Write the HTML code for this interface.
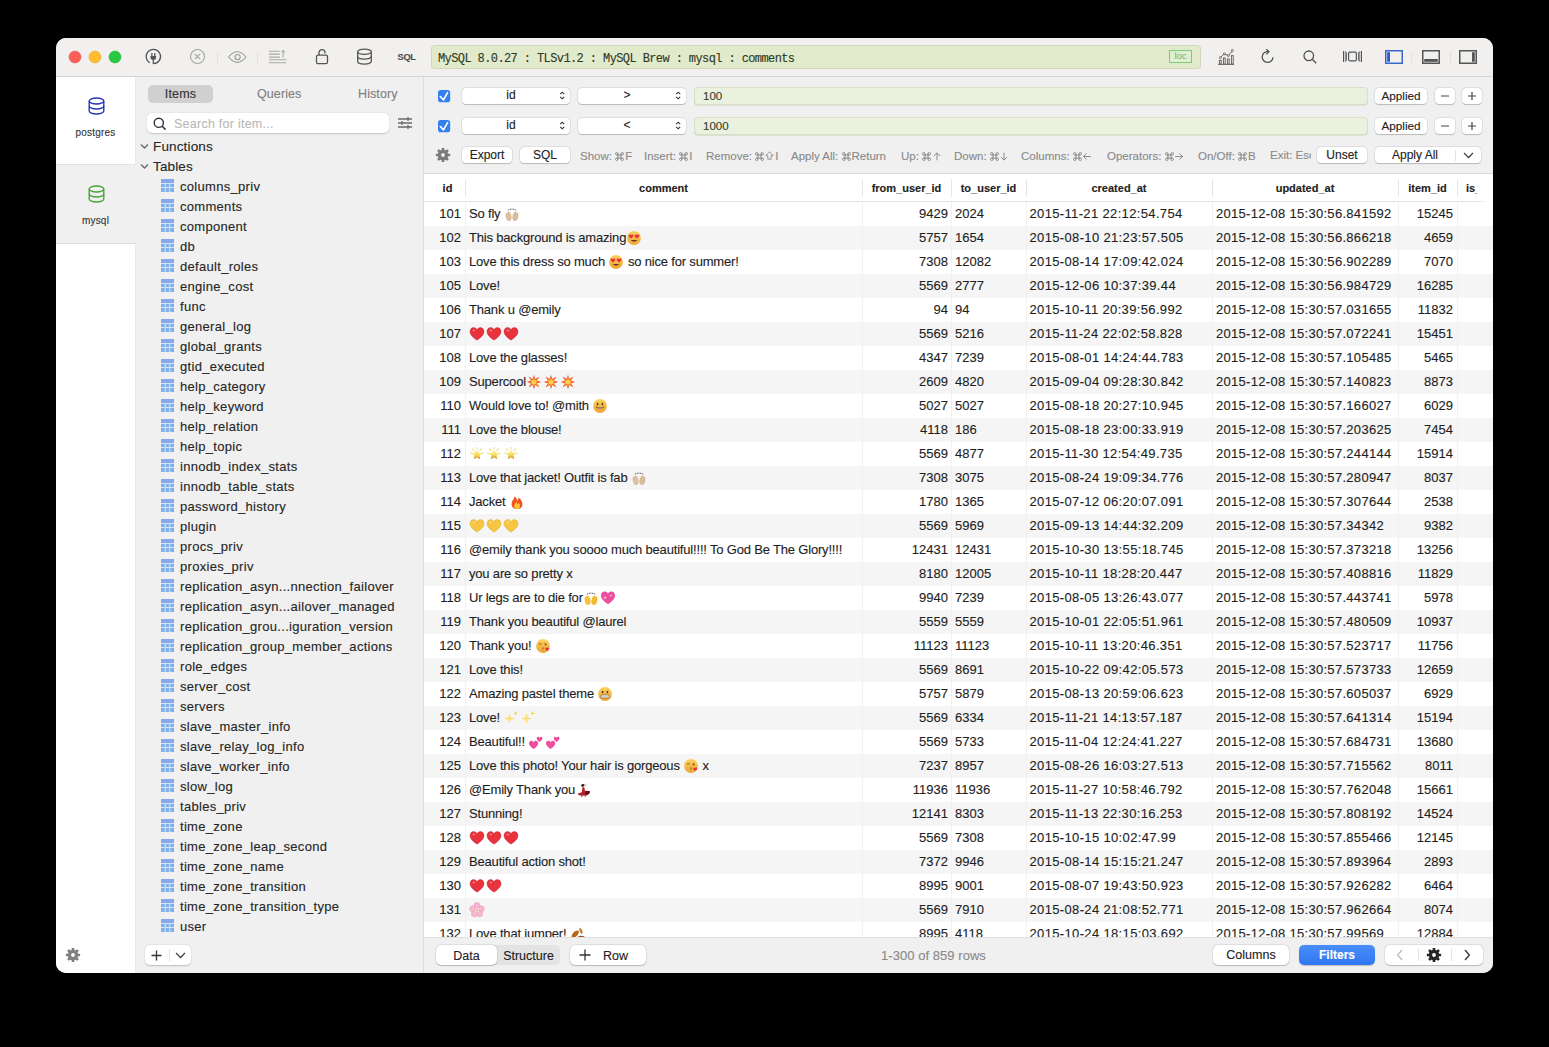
<!DOCTYPE html>
<html><head><meta charset="utf-8"><title>TablePlus</title><style>
*{box-sizing:border-box}
html,body{margin:0;padding:0}
body{width:1549px;height:1047px;background:#000;overflow:hidden;position:relative;font-family:"Liberation Sans",sans-serif;color:#222}
#win{position:absolute;left:56px;top:38px;width:1437px;height:935px;border-radius:10px;overflow:hidden;background:#f0f0f0}
.a{position:absolute}
.t{position:absolute;white-space:nowrap;-webkit-text-stroke:0.12px currentColor}
svg{position:absolute;overflow:visible}
svg.e{position:static;display:inline-block;vertical-align:-2px}
</style></head>
<body><div id="win">
<div class="a" style="left:0px;top:0px;width:1437px;height:38px;background:#f1f0ee"></div><div class="a" style="left:0px;top:38px;width:1437px;height:1px;background:#d6d6d6"></div><svg style="left:12px;top:12px;" width="14" height="14" viewBox="0 0 14 14"><circle cx="7" cy="7" r="6" fill="#fe5f57" stroke="#e14640" stroke-width="0.5"/></svg><svg style="left:32px;top:12px;" width="14" height="14" viewBox="0 0 14 14"><circle cx="7" cy="7" r="6" fill="#febc2e" stroke="#dea123" stroke-width="0.5"/></svg><svg style="left:52px;top:12px;" width="14" height="14" viewBox="0 0 14 14"><circle cx="7" cy="7" r="6" fill="#28c840" stroke="#1aab29" stroke-width="0.5"/></svg><svg style="left:89px;top:10px;" width="17" height="17" viewBox="0 0 17 17"><path d="M4.7 14.7 A7.2 7.2 0 1 1 8.3 15.7" fill="none" stroke="#555" stroke-width="1.25"/><path d="M5.5 7.9 h5.6 v1.6 a2.8 2.4 0 0 1 -5.6 0 z" fill="#555"/><rect x="6.2" y="4.9" width="1.3" height="3.2" rx="0.5" fill="#555"/><rect x="9.1" y="4.9" width="1.3" height="3.2" rx="0.5" fill="#555"/><rect x="7.65" y="11" width="1.3" height="4.9" fill="#555"/></svg><svg style="left:133px;top:10px;" width="17" height="17" viewBox="0 0 17 17"><circle cx="8.5" cy="8.5" r="7" fill="none" stroke="#a3a3a3" stroke-width="1.1"/><path d="M5.8 5.8 L11.2 11.2 M11.2 5.8 L5.8 11.2" stroke="#a3a3a3" stroke-width="1.1"/></svg><div class="a" style="left:161px;top:14px;width:1px;height:12px;background:#e2e2e2"></div><svg style="left:171px;top:12px;" width="21" height="14" viewBox="0 0 21 14"><path d="M1.6 7 Q10.3 -3.6 19 7 Q10.3 17.6 1.6 7 Z" fill="none" stroke="#9c9c9c" stroke-width="1.15"/><circle cx="10.6" cy="7.1" r="2.6" fill="none" stroke="#9c9c9c" stroke-width="1.15"/></svg><div class="a" style="left:201px;top:14px;width:1px;height:12px;background:#e2e2e2"></div><svg style="left:212px;top:11px;" width="20" height="16" viewBox="0 0 20 16"><g stroke="#a8a8a8" stroke-width="1.1"><path d="M1 2.2 H11.8 M1 5.1 H11.8 M1 8.1 H11.8 M1 10.8 H18.2 M1 13.7 H18.2"/><path d="M15.2 8.6 V1.6 M13.6 3.2 L15.2 1.6 L16.8 3.2" fill="none"/></g></svg><svg style="left:258px;top:10px;" width="16" height="18" viewBox="0 0 16 18"><rect x="2.5" y="7.2" width="11" height="8.5" rx="1.6" fill="none" stroke="#555" stroke-width="1.3"/><path d="M5 7.2 V4.6 A3 3 0 0 1 11 4.6 V5.4" fill="none" stroke="#555" stroke-width="1.3"/></svg><svg style="left:300px;top:10px;" width="17" height="18" viewBox="0 0 17 18"><g fill="none" stroke="#555" stroke-width="1.3"><ellipse cx="8.5" cy="3.8" rx="6.8" ry="2.6"/><path d="M1.7 3.8 V13.6 A6.8 2.6 0 0 0 15.3 13.6 V3.8"/><path d="M1.7 8.6 A6.8 2.6 0 0 0 15.3 8.6"/></g></svg><div class="t" style="left:341.5px;top:12.100000000000001px;font-size:9.3px;line-height:14px;color:#4f4f4f;font-weight:bold;letter-spacing:-0.3px;">SQL</div><div class="a" style="left:375px;top:7px;width:770px;height:24px;background:#e2eacc;border:1px solid #d0d7bd;border-radius:3.5px"></div><div class="t" style="left:382px;top:12.700000000000003px;font-size:12px;line-height:16px;color:#2f3a26;letter-spacing:-0.6px;font-family:'Liberation Mono',monospace;">MySQL 8.0.27 : TLSv1.2 : MySQL Brew : mysql : comments</div><div class="a" style="left:1113px;top:12px;width:23px;height:13px;border:1px solid #7acb79;background:#e0efd0"></div><div class="t" style="left:1113px;top:11.5px;font-size:9.5px;line-height:12px;color:#78c078;width:23px;text-align:center;">loc</div><svg style="left:1161px;top:10px;" width="18" height="18" viewBox="0 0 18 18"><g fill="none" stroke="#5a5a5a" stroke-width="0.9"><path d="M1 16.4 H17"/><rect x="2.4" y="12.4" width="1.8" height="3.6"/><rect x="6.4" y="10" width="1.8" height="6"/><rect x="10.4" y="11" width="1.8" height="5"/><rect x="14.4" y="7.6" width="1.8" height="8.4"/><path d="M3.3 9.6 L7.3 5.8 L11.3 7.6 L15.3 3.2"/></g><g fill="#f1f0ee" stroke="#5a5a5a" stroke-width="0.8"><circle cx="3.3" cy="9.6" r="1"/><circle cx="7.3" cy="5.8" r="1"/><circle cx="11.3" cy="7.6" r="1"/><circle cx="15.3" cy="2.6" r="1.1"/></g></svg><svg style="left:1204px;top:10px;" width="17" height="17" viewBox="0 0 17 17"><path d="M13 9.2 A5.4 5.4 0 1 1 8.2 3.6" fill="none" stroke="#555" stroke-width="1.3"/><path d="M6.2 1.2 L9 3.6 L6.4 6.2" fill="none" stroke="#555" stroke-width="1.3"/></svg><svg style="left:1246px;top:11px;" width="16" height="16" viewBox="0 0 16 16"><circle cx="6.8" cy="6.8" r="4.8" fill="none" stroke="#555" stroke-width="1.3"/><path d="M10.3 10.3 L14.2 14.2" stroke="#555" stroke-width="1.4"/></svg><svg style="left:1286px;top:12px;" width="21" height="14" viewBox="0 0 21 14"><g fill="none" stroke="#555" stroke-width="1.2"><path d="M1.6 1 V12 M19.4 1 V12"/><rect x="6.6" y="2.2" width="7.8" height="8.6" rx="1.2"/></g><path d="M3.4 1 L4.8 2.4 V10.6 L3.4 12 Z M17.6 1 L16.2 2.4 V10.6 L17.6 12 Z" fill="#555"/></svg><svg style="left:1329px;top:12px;" width="18" height="14" viewBox="0 0 18 14"><rect x="0.75" y="0.75" width="16.5" height="12.5" fill="none" stroke="#3a68c8" stroke-width="1.5"/><rect x="2.2" y="2.2" width="2.8" height="9.6" fill="#2c58d4"/></svg><div class="a" style="left:1355px;top:14px;width:1px;height:11px;background:#e0e0e0"></div><svg style="left:1366px;top:12px;" width="18" height="14" viewBox="0 0 18 14"><rect x="0.75" y="0.75" width="16.5" height="12.5" fill="none" stroke="#555" stroke-width="1.5"/><rect x="2.2" y="9" width="13.6" height="2.8" fill="#555"/></svg><div class="a" style="left:1394px;top:14px;width:1px;height:11px;background:#e0e0e0"></div><svg style="left:1403px;top:12px;" width="18" height="14" viewBox="0 0 18 14"><rect x="0.75" y="0.75" width="16.5" height="12.5" fill="none" stroke="#555" stroke-width="1.5"/><rect x="13" y="2.2" width="2.8" height="9.6" fill="#555"/></svg><div class="a" style="left:0px;top:39px;width:79px;height:896px;background:#fff"></div><div class="a" style="left:79px;top:39px;width:1px;height:896px;background:#e9e9e9"></div><div class="a" style="left:0px;top:126px;width:80px;height:79px;background:#f0f0f0"></div><div class="a" style="left:0px;top:126px;width:79px;height:1px;background:#e2e2e2"></div><div class="a" style="left:0px;top:205px;width:79px;height:1px;background:#dcdcdc"></div><svg style="left:32px;top:59px;" width="17" height="18" viewBox="0 0 17 18"><g fill="none" stroke="#2437b8" stroke-width="1.4"><ellipse cx="8.5" cy="4" rx="7.3" ry="3"/><path d="M1.2 4 V14 A7.3 3 0 0 0 15.8 14 V4"/><path d="M1.2 9 A7.3 3 0 0 0 15.8 9"/></g></svg><div class="t" style="left:0px;top:88.0px;font-size:10px;line-height:14px;color:#333;letter-spacing:0.2px;width:79px;text-align:center;">postgres</div><svg style="left:32px;top:147px;" width="17" height="18" viewBox="0 0 17 18"><g fill="none" stroke="#4aa43a" stroke-width="1.4"><ellipse cx="8.5" cy="4" rx="7.3" ry="3"/><path d="M1.2 4 V14 A7.3 3 0 0 0 15.8 14 V4"/><path d="M1.2 9 A7.3 3 0 0 0 15.8 9"/></g></svg><div class="t" style="left:0px;top:176.0px;font-size:10px;line-height:14px;color:#333;letter-spacing:0.2px;width:79px;text-align:center;">mysql</div><svg style="left:9px;top:909px;" width="16" height="16" viewBox="0 0 16 16"><circle cx="8" cy="8" r="5.2" fill="#808080"/><rect x="6.65" y="0.9000000000000004" width="2.7" height="3.3999999999999995" rx="0.6" fill="#808080" transform="rotate(0 8 8)"/><rect x="6.65" y="0.9000000000000004" width="2.7" height="3.3999999999999995" rx="0.6" fill="#808080" transform="rotate(45 8 8)"/><rect x="6.65" y="0.9000000000000004" width="2.7" height="3.3999999999999995" rx="0.6" fill="#808080" transform="rotate(90 8 8)"/><rect x="6.65" y="0.9000000000000004" width="2.7" height="3.3999999999999995" rx="0.6" fill="#808080" transform="rotate(135 8 8)"/><rect x="6.65" y="0.9000000000000004" width="2.7" height="3.3999999999999995" rx="0.6" fill="#808080" transform="rotate(180 8 8)"/><rect x="6.65" y="0.9000000000000004" width="2.7" height="3.3999999999999995" rx="0.6" fill="#808080" transform="rotate(225 8 8)"/><rect x="6.65" y="0.9000000000000004" width="2.7" height="3.3999999999999995" rx="0.6" fill="#808080" transform="rotate(270 8 8)"/><rect x="6.65" y="0.9000000000000004" width="2.7" height="3.3999999999999995" rx="0.6" fill="#808080" transform="rotate(315 8 8)"/><circle cx="8" cy="8" r="1.9" fill="#fff"/></svg><div class="a" style="left:80px;top:39px;width:287px;height:896px;background:#f0f0f0"></div><div class="a" style="left:367px;top:39px;width:1px;height:896px;background:#dcdcdc"></div><div class="a" style="left:92px;top:47px;width:65px;height:18px;background:#d0d0d0;border-radius:5px"></div><div class="t" style="left:92px;top:48.0px;font-size:12.5px;line-height:16px;color:#333;letter-spacing:0.2px;width:65px;text-align:center;">Items</div><div class="t" style="left:201px;top:48.0px;font-size:12.5px;line-height:16px;color:#7f7f7f;letter-spacing:0.1px;">Queries</div><div class="t" style="left:302px;top:48.0px;font-size:12.5px;line-height:16px;color:#7f7f7f;letter-spacing:0.1px;">History</div><div class="a" style="left:91px;top:75px;width:242px;height:20px;background:#fff;border-radius:5px;box-shadow:0 0.5px 1.5px rgba(0,0,0,0.18)"></div><svg style="left:97px;top:79px;" width="14" height="14" viewBox="0 0 14 14"><circle cx="5.8" cy="5.8" r="4.6" fill="none" stroke="#333" stroke-width="1.4"/><path d="M9.2 9.2 L12.6 12.6" stroke="#333" stroke-width="1.5"/></svg><div class="t" style="left:118px;top:78.0px;font-size:12.5px;line-height:16px;color:#b9b9b9;letter-spacing:0.25px;">Search for item...</div><svg style="left:341px;top:78px;" width="16" height="14" viewBox="0 0 16 14"><g stroke="#6a6a6a" stroke-width="1.3"><path d="M1 3 H15 M1 7 H15 M1 11 H15"/><path d="M11 1 V5 M5 5 V9 M11 9 V13"/></g></svg><svg style="left:84px;top:105px;" width="9" height="7" viewBox="0 0 9 7"><path d="M1 1.5 L4.5 5 L8 1.5" fill="none" stroke="#6a6a6a" stroke-width="1.4"/></svg><div class="t" style="left:97px;top:99.0px;font-size:13.5px;line-height:20px;color:#262626;letter-spacing:0.15px;">Functions</div><svg style="left:84px;top:125px;" width="9" height="7" viewBox="0 0 9 7"><path d="M1 1.5 L4.5 5 L8 1.5" fill="none" stroke="#6a6a6a" stroke-width="1.4"/></svg><div class="t" style="left:97px;top:119.0px;font-size:13.5px;line-height:20px;color:#262626;letter-spacing:0.15px;">Tables</div><svg style="left:105px;top:141px;" width="13" height="13" viewBox="0 0 13 13"><rect x="0" y="0" width="13" height="13" fill="#d2e6fb"/><rect x="0" y="0" width="13" height="4" fill="#87a8e8"/><rect x="0" y="5" width="3.7" height="3" fill="#7fb0ea"/><rect x="4.7" y="5" width="3.6" height="3" fill="#86afed"/><rect x="9.3" y="5" width="3.7" height="3" fill="#7fb0ea"/><rect x="0" y="9" width="3.7" height="4" fill="#7fb0ea"/><rect x="4.7" y="9" width="3.6" height="4" fill="#86afed"/><rect x="9.3" y="9" width="3.7" height="4" fill="#7fb0ea"/></svg><div class="t" style="left:124px;top:139.0px;font-size:13px;line-height:20px;color:#262626;letter-spacing:0.3px;">columns_priv</div><svg style="left:105px;top:161px;" width="13" height="13" viewBox="0 0 13 13"><rect x="0" y="0" width="13" height="13" fill="#d2e6fb"/><rect x="0" y="0" width="13" height="4" fill="#87a8e8"/><rect x="0" y="5" width="3.7" height="3" fill="#7fb0ea"/><rect x="4.7" y="5" width="3.6" height="3" fill="#86afed"/><rect x="9.3" y="5" width="3.7" height="3" fill="#7fb0ea"/><rect x="0" y="9" width="3.7" height="4" fill="#7fb0ea"/><rect x="4.7" y="9" width="3.6" height="4" fill="#86afed"/><rect x="9.3" y="9" width="3.7" height="4" fill="#7fb0ea"/></svg><div class="t" style="left:124px;top:159.0px;font-size:13px;line-height:20px;color:#262626;letter-spacing:0.3px;">comments</div><svg style="left:105px;top:181px;" width="13" height="13" viewBox="0 0 13 13"><rect x="0" y="0" width="13" height="13" fill="#d2e6fb"/><rect x="0" y="0" width="13" height="4" fill="#87a8e8"/><rect x="0" y="5" width="3.7" height="3" fill="#7fb0ea"/><rect x="4.7" y="5" width="3.6" height="3" fill="#86afed"/><rect x="9.3" y="5" width="3.7" height="3" fill="#7fb0ea"/><rect x="0" y="9" width="3.7" height="4" fill="#7fb0ea"/><rect x="4.7" y="9" width="3.6" height="4" fill="#86afed"/><rect x="9.3" y="9" width="3.7" height="4" fill="#7fb0ea"/></svg><div class="t" style="left:124px;top:179.0px;font-size:13px;line-height:20px;color:#262626;letter-spacing:0.3px;">component</div><svg style="left:105px;top:201px;" width="13" height="13" viewBox="0 0 13 13"><rect x="0" y="0" width="13" height="13" fill="#d2e6fb"/><rect x="0" y="0" width="13" height="4" fill="#87a8e8"/><rect x="0" y="5" width="3.7" height="3" fill="#7fb0ea"/><rect x="4.7" y="5" width="3.6" height="3" fill="#86afed"/><rect x="9.3" y="5" width="3.7" height="3" fill="#7fb0ea"/><rect x="0" y="9" width="3.7" height="4" fill="#7fb0ea"/><rect x="4.7" y="9" width="3.6" height="4" fill="#86afed"/><rect x="9.3" y="9" width="3.7" height="4" fill="#7fb0ea"/></svg><div class="t" style="left:124px;top:199.0px;font-size:13px;line-height:20px;color:#262626;letter-spacing:0.3px;">db</div><svg style="left:105px;top:221px;" width="13" height="13" viewBox="0 0 13 13"><rect x="0" y="0" width="13" height="13" fill="#d2e6fb"/><rect x="0" y="0" width="13" height="4" fill="#87a8e8"/><rect x="0" y="5" width="3.7" height="3" fill="#7fb0ea"/><rect x="4.7" y="5" width="3.6" height="3" fill="#86afed"/><rect x="9.3" y="5" width="3.7" height="3" fill="#7fb0ea"/><rect x="0" y="9" width="3.7" height="4" fill="#7fb0ea"/><rect x="4.7" y="9" width="3.6" height="4" fill="#86afed"/><rect x="9.3" y="9" width="3.7" height="4" fill="#7fb0ea"/></svg><div class="t" style="left:124px;top:219.0px;font-size:13px;line-height:20px;color:#262626;letter-spacing:0.3px;">default_roles</div><svg style="left:105px;top:241px;" width="13" height="13" viewBox="0 0 13 13"><rect x="0" y="0" width="13" height="13" fill="#d2e6fb"/><rect x="0" y="0" width="13" height="4" fill="#87a8e8"/><rect x="0" y="5" width="3.7" height="3" fill="#7fb0ea"/><rect x="4.7" y="5" width="3.6" height="3" fill="#86afed"/><rect x="9.3" y="5" width="3.7" height="3" fill="#7fb0ea"/><rect x="0" y="9" width="3.7" height="4" fill="#7fb0ea"/><rect x="4.7" y="9" width="3.6" height="4" fill="#86afed"/><rect x="9.3" y="9" width="3.7" height="4" fill="#7fb0ea"/></svg><div class="t" style="left:124px;top:239.0px;font-size:13px;line-height:20px;color:#262626;letter-spacing:0.3px;">engine_cost</div><svg style="left:105px;top:261px;" width="13" height="13" viewBox="0 0 13 13"><rect x="0" y="0" width="13" height="13" fill="#d2e6fb"/><rect x="0" y="0" width="13" height="4" fill="#87a8e8"/><rect x="0" y="5" width="3.7" height="3" fill="#7fb0ea"/><rect x="4.7" y="5" width="3.6" height="3" fill="#86afed"/><rect x="9.3" y="5" width="3.7" height="3" fill="#7fb0ea"/><rect x="0" y="9" width="3.7" height="4" fill="#7fb0ea"/><rect x="4.7" y="9" width="3.6" height="4" fill="#86afed"/><rect x="9.3" y="9" width="3.7" height="4" fill="#7fb0ea"/></svg><div class="t" style="left:124px;top:259.0px;font-size:13px;line-height:20px;color:#262626;letter-spacing:0.3px;">func</div><svg style="left:105px;top:281px;" width="13" height="13" viewBox="0 0 13 13"><rect x="0" y="0" width="13" height="13" fill="#d2e6fb"/><rect x="0" y="0" width="13" height="4" fill="#87a8e8"/><rect x="0" y="5" width="3.7" height="3" fill="#7fb0ea"/><rect x="4.7" y="5" width="3.6" height="3" fill="#86afed"/><rect x="9.3" y="5" width="3.7" height="3" fill="#7fb0ea"/><rect x="0" y="9" width="3.7" height="4" fill="#7fb0ea"/><rect x="4.7" y="9" width="3.6" height="4" fill="#86afed"/><rect x="9.3" y="9" width="3.7" height="4" fill="#7fb0ea"/></svg><div class="t" style="left:124px;top:279.0px;font-size:13px;line-height:20px;color:#262626;letter-spacing:0.3px;">general_log</div><svg style="left:105px;top:301px;" width="13" height="13" viewBox="0 0 13 13"><rect x="0" y="0" width="13" height="13" fill="#d2e6fb"/><rect x="0" y="0" width="13" height="4" fill="#87a8e8"/><rect x="0" y="5" width="3.7" height="3" fill="#7fb0ea"/><rect x="4.7" y="5" width="3.6" height="3" fill="#86afed"/><rect x="9.3" y="5" width="3.7" height="3" fill="#7fb0ea"/><rect x="0" y="9" width="3.7" height="4" fill="#7fb0ea"/><rect x="4.7" y="9" width="3.6" height="4" fill="#86afed"/><rect x="9.3" y="9" width="3.7" height="4" fill="#7fb0ea"/></svg><div class="t" style="left:124px;top:299.0px;font-size:13px;line-height:20px;color:#262626;letter-spacing:0.3px;">global_grants</div><svg style="left:105px;top:321px;" width="13" height="13" viewBox="0 0 13 13"><rect x="0" y="0" width="13" height="13" fill="#d2e6fb"/><rect x="0" y="0" width="13" height="4" fill="#87a8e8"/><rect x="0" y="5" width="3.7" height="3" fill="#7fb0ea"/><rect x="4.7" y="5" width="3.6" height="3" fill="#86afed"/><rect x="9.3" y="5" width="3.7" height="3" fill="#7fb0ea"/><rect x="0" y="9" width="3.7" height="4" fill="#7fb0ea"/><rect x="4.7" y="9" width="3.6" height="4" fill="#86afed"/><rect x="9.3" y="9" width="3.7" height="4" fill="#7fb0ea"/></svg><div class="t" style="left:124px;top:319.0px;font-size:13px;line-height:20px;color:#262626;letter-spacing:0.3px;">gtid_executed</div><svg style="left:105px;top:341px;" width="13" height="13" viewBox="0 0 13 13"><rect x="0" y="0" width="13" height="13" fill="#d2e6fb"/><rect x="0" y="0" width="13" height="4" fill="#87a8e8"/><rect x="0" y="5" width="3.7" height="3" fill="#7fb0ea"/><rect x="4.7" y="5" width="3.6" height="3" fill="#86afed"/><rect x="9.3" y="5" width="3.7" height="3" fill="#7fb0ea"/><rect x="0" y="9" width="3.7" height="4" fill="#7fb0ea"/><rect x="4.7" y="9" width="3.6" height="4" fill="#86afed"/><rect x="9.3" y="9" width="3.7" height="4" fill="#7fb0ea"/></svg><div class="t" style="left:124px;top:339.0px;font-size:13px;line-height:20px;color:#262626;letter-spacing:0.3px;">help_category</div><svg style="left:105px;top:361px;" width="13" height="13" viewBox="0 0 13 13"><rect x="0" y="0" width="13" height="13" fill="#d2e6fb"/><rect x="0" y="0" width="13" height="4" fill="#87a8e8"/><rect x="0" y="5" width="3.7" height="3" fill="#7fb0ea"/><rect x="4.7" y="5" width="3.6" height="3" fill="#86afed"/><rect x="9.3" y="5" width="3.7" height="3" fill="#7fb0ea"/><rect x="0" y="9" width="3.7" height="4" fill="#7fb0ea"/><rect x="4.7" y="9" width="3.6" height="4" fill="#86afed"/><rect x="9.3" y="9" width="3.7" height="4" fill="#7fb0ea"/></svg><div class="t" style="left:124px;top:359.0px;font-size:13px;line-height:20px;color:#262626;letter-spacing:0.3px;">help_keyword</div><svg style="left:105px;top:381px;" width="13" height="13" viewBox="0 0 13 13"><rect x="0" y="0" width="13" height="13" fill="#d2e6fb"/><rect x="0" y="0" width="13" height="4" fill="#87a8e8"/><rect x="0" y="5" width="3.7" height="3" fill="#7fb0ea"/><rect x="4.7" y="5" width="3.6" height="3" fill="#86afed"/><rect x="9.3" y="5" width="3.7" height="3" fill="#7fb0ea"/><rect x="0" y="9" width="3.7" height="4" fill="#7fb0ea"/><rect x="4.7" y="9" width="3.6" height="4" fill="#86afed"/><rect x="9.3" y="9" width="3.7" height="4" fill="#7fb0ea"/></svg><div class="t" style="left:124px;top:379.0px;font-size:13px;line-height:20px;color:#262626;letter-spacing:0.3px;">help_relation</div><svg style="left:105px;top:401px;" width="13" height="13" viewBox="0 0 13 13"><rect x="0" y="0" width="13" height="13" fill="#d2e6fb"/><rect x="0" y="0" width="13" height="4" fill="#87a8e8"/><rect x="0" y="5" width="3.7" height="3" fill="#7fb0ea"/><rect x="4.7" y="5" width="3.6" height="3" fill="#86afed"/><rect x="9.3" y="5" width="3.7" height="3" fill="#7fb0ea"/><rect x="0" y="9" width="3.7" height="4" fill="#7fb0ea"/><rect x="4.7" y="9" width="3.6" height="4" fill="#86afed"/><rect x="9.3" y="9" width="3.7" height="4" fill="#7fb0ea"/></svg><div class="t" style="left:124px;top:399.0px;font-size:13px;line-height:20px;color:#262626;letter-spacing:0.3px;">help_topic</div><svg style="left:105px;top:421px;" width="13" height="13" viewBox="0 0 13 13"><rect x="0" y="0" width="13" height="13" fill="#d2e6fb"/><rect x="0" y="0" width="13" height="4" fill="#87a8e8"/><rect x="0" y="5" width="3.7" height="3" fill="#7fb0ea"/><rect x="4.7" y="5" width="3.6" height="3" fill="#86afed"/><rect x="9.3" y="5" width="3.7" height="3" fill="#7fb0ea"/><rect x="0" y="9" width="3.7" height="4" fill="#7fb0ea"/><rect x="4.7" y="9" width="3.6" height="4" fill="#86afed"/><rect x="9.3" y="9" width="3.7" height="4" fill="#7fb0ea"/></svg><div class="t" style="left:124px;top:419.0px;font-size:13px;line-height:20px;color:#262626;letter-spacing:0.3px;">innodb_index_stats</div><svg style="left:105px;top:441px;" width="13" height="13" viewBox="0 0 13 13"><rect x="0" y="0" width="13" height="13" fill="#d2e6fb"/><rect x="0" y="0" width="13" height="4" fill="#87a8e8"/><rect x="0" y="5" width="3.7" height="3" fill="#7fb0ea"/><rect x="4.7" y="5" width="3.6" height="3" fill="#86afed"/><rect x="9.3" y="5" width="3.7" height="3" fill="#7fb0ea"/><rect x="0" y="9" width="3.7" height="4" fill="#7fb0ea"/><rect x="4.7" y="9" width="3.6" height="4" fill="#86afed"/><rect x="9.3" y="9" width="3.7" height="4" fill="#7fb0ea"/></svg><div class="t" style="left:124px;top:439.0px;font-size:13px;line-height:20px;color:#262626;letter-spacing:0.3px;">innodb_table_stats</div><svg style="left:105px;top:461px;" width="13" height="13" viewBox="0 0 13 13"><rect x="0" y="0" width="13" height="13" fill="#d2e6fb"/><rect x="0" y="0" width="13" height="4" fill="#87a8e8"/><rect x="0" y="5" width="3.7" height="3" fill="#7fb0ea"/><rect x="4.7" y="5" width="3.6" height="3" fill="#86afed"/><rect x="9.3" y="5" width="3.7" height="3" fill="#7fb0ea"/><rect x="0" y="9" width="3.7" height="4" fill="#7fb0ea"/><rect x="4.7" y="9" width="3.6" height="4" fill="#86afed"/><rect x="9.3" y="9" width="3.7" height="4" fill="#7fb0ea"/></svg><div class="t" style="left:124px;top:459.0px;font-size:13px;line-height:20px;color:#262626;letter-spacing:0.3px;">password_history</div><svg style="left:105px;top:481px;" width="13" height="13" viewBox="0 0 13 13"><rect x="0" y="0" width="13" height="13" fill="#d2e6fb"/><rect x="0" y="0" width="13" height="4" fill="#87a8e8"/><rect x="0" y="5" width="3.7" height="3" fill="#7fb0ea"/><rect x="4.7" y="5" width="3.6" height="3" fill="#86afed"/><rect x="9.3" y="5" width="3.7" height="3" fill="#7fb0ea"/><rect x="0" y="9" width="3.7" height="4" fill="#7fb0ea"/><rect x="4.7" y="9" width="3.6" height="4" fill="#86afed"/><rect x="9.3" y="9" width="3.7" height="4" fill="#7fb0ea"/></svg><div class="t" style="left:124px;top:479.0px;font-size:13px;line-height:20px;color:#262626;letter-spacing:0.3px;">plugin</div><svg style="left:105px;top:501px;" width="13" height="13" viewBox="0 0 13 13"><rect x="0" y="0" width="13" height="13" fill="#d2e6fb"/><rect x="0" y="0" width="13" height="4" fill="#87a8e8"/><rect x="0" y="5" width="3.7" height="3" fill="#7fb0ea"/><rect x="4.7" y="5" width="3.6" height="3" fill="#86afed"/><rect x="9.3" y="5" width="3.7" height="3" fill="#7fb0ea"/><rect x="0" y="9" width="3.7" height="4" fill="#7fb0ea"/><rect x="4.7" y="9" width="3.6" height="4" fill="#86afed"/><rect x="9.3" y="9" width="3.7" height="4" fill="#7fb0ea"/></svg><div class="t" style="left:124px;top:499.0px;font-size:13px;line-height:20px;color:#262626;letter-spacing:0.3px;">procs_priv</div><svg style="left:105px;top:521px;" width="13" height="13" viewBox="0 0 13 13"><rect x="0" y="0" width="13" height="13" fill="#d2e6fb"/><rect x="0" y="0" width="13" height="4" fill="#87a8e8"/><rect x="0" y="5" width="3.7" height="3" fill="#7fb0ea"/><rect x="4.7" y="5" width="3.6" height="3" fill="#86afed"/><rect x="9.3" y="5" width="3.7" height="3" fill="#7fb0ea"/><rect x="0" y="9" width="3.7" height="4" fill="#7fb0ea"/><rect x="4.7" y="9" width="3.6" height="4" fill="#86afed"/><rect x="9.3" y="9" width="3.7" height="4" fill="#7fb0ea"/></svg><div class="t" style="left:124px;top:519.0px;font-size:13px;line-height:20px;color:#262626;letter-spacing:0.3px;">proxies_priv</div><svg style="left:105px;top:541px;" width="13" height="13" viewBox="0 0 13 13"><rect x="0" y="0" width="13" height="13" fill="#d2e6fb"/><rect x="0" y="0" width="13" height="4" fill="#87a8e8"/><rect x="0" y="5" width="3.7" height="3" fill="#7fb0ea"/><rect x="4.7" y="5" width="3.6" height="3" fill="#86afed"/><rect x="9.3" y="5" width="3.7" height="3" fill="#7fb0ea"/><rect x="0" y="9" width="3.7" height="4" fill="#7fb0ea"/><rect x="4.7" y="9" width="3.6" height="4" fill="#86afed"/><rect x="9.3" y="9" width="3.7" height="4" fill="#7fb0ea"/></svg><div class="t" style="left:124px;top:539.0px;font-size:13px;line-height:20px;color:#262626;letter-spacing:0.3px;">replication_asyn...nnection_failover</div><svg style="left:105px;top:561px;" width="13" height="13" viewBox="0 0 13 13"><rect x="0" y="0" width="13" height="13" fill="#d2e6fb"/><rect x="0" y="0" width="13" height="4" fill="#87a8e8"/><rect x="0" y="5" width="3.7" height="3" fill="#7fb0ea"/><rect x="4.7" y="5" width="3.6" height="3" fill="#86afed"/><rect x="9.3" y="5" width="3.7" height="3" fill="#7fb0ea"/><rect x="0" y="9" width="3.7" height="4" fill="#7fb0ea"/><rect x="4.7" y="9" width="3.6" height="4" fill="#86afed"/><rect x="9.3" y="9" width="3.7" height="4" fill="#7fb0ea"/></svg><div class="t" style="left:124px;top:559.0px;font-size:13px;line-height:20px;color:#262626;letter-spacing:0.3px;">replication_asyn...ailover_managed</div><svg style="left:105px;top:581px;" width="13" height="13" viewBox="0 0 13 13"><rect x="0" y="0" width="13" height="13" fill="#d2e6fb"/><rect x="0" y="0" width="13" height="4" fill="#87a8e8"/><rect x="0" y="5" width="3.7" height="3" fill="#7fb0ea"/><rect x="4.7" y="5" width="3.6" height="3" fill="#86afed"/><rect x="9.3" y="5" width="3.7" height="3" fill="#7fb0ea"/><rect x="0" y="9" width="3.7" height="4" fill="#7fb0ea"/><rect x="4.7" y="9" width="3.6" height="4" fill="#86afed"/><rect x="9.3" y="9" width="3.7" height="4" fill="#7fb0ea"/></svg><div class="t" style="left:124px;top:579.0px;font-size:13px;line-height:20px;color:#262626;letter-spacing:0.3px;">replication_grou...iguration_version</div><svg style="left:105px;top:601px;" width="13" height="13" viewBox="0 0 13 13"><rect x="0" y="0" width="13" height="13" fill="#d2e6fb"/><rect x="0" y="0" width="13" height="4" fill="#87a8e8"/><rect x="0" y="5" width="3.7" height="3" fill="#7fb0ea"/><rect x="4.7" y="5" width="3.6" height="3" fill="#86afed"/><rect x="9.3" y="5" width="3.7" height="3" fill="#7fb0ea"/><rect x="0" y="9" width="3.7" height="4" fill="#7fb0ea"/><rect x="4.7" y="9" width="3.6" height="4" fill="#86afed"/><rect x="9.3" y="9" width="3.7" height="4" fill="#7fb0ea"/></svg><div class="t" style="left:124px;top:599.0px;font-size:13px;line-height:20px;color:#262626;letter-spacing:0.3px;">replication_group_member_actions</div><svg style="left:105px;top:621px;" width="13" height="13" viewBox="0 0 13 13"><rect x="0" y="0" width="13" height="13" fill="#d2e6fb"/><rect x="0" y="0" width="13" height="4" fill="#87a8e8"/><rect x="0" y="5" width="3.7" height="3" fill="#7fb0ea"/><rect x="4.7" y="5" width="3.6" height="3" fill="#86afed"/><rect x="9.3" y="5" width="3.7" height="3" fill="#7fb0ea"/><rect x="0" y="9" width="3.7" height="4" fill="#7fb0ea"/><rect x="4.7" y="9" width="3.6" height="4" fill="#86afed"/><rect x="9.3" y="9" width="3.7" height="4" fill="#7fb0ea"/></svg><div class="t" style="left:124px;top:619.0px;font-size:13px;line-height:20px;color:#262626;letter-spacing:0.3px;">role_edges</div><svg style="left:105px;top:641px;" width="13" height="13" viewBox="0 0 13 13"><rect x="0" y="0" width="13" height="13" fill="#d2e6fb"/><rect x="0" y="0" width="13" height="4" fill="#87a8e8"/><rect x="0" y="5" width="3.7" height="3" fill="#7fb0ea"/><rect x="4.7" y="5" width="3.6" height="3" fill="#86afed"/><rect x="9.3" y="5" width="3.7" height="3" fill="#7fb0ea"/><rect x="0" y="9" width="3.7" height="4" fill="#7fb0ea"/><rect x="4.7" y="9" width="3.6" height="4" fill="#86afed"/><rect x="9.3" y="9" width="3.7" height="4" fill="#7fb0ea"/></svg><div class="t" style="left:124px;top:639.0px;font-size:13px;line-height:20px;color:#262626;letter-spacing:0.3px;">server_cost</div><svg style="left:105px;top:661px;" width="13" height="13" viewBox="0 0 13 13"><rect x="0" y="0" width="13" height="13" fill="#d2e6fb"/><rect x="0" y="0" width="13" height="4" fill="#87a8e8"/><rect x="0" y="5" width="3.7" height="3" fill="#7fb0ea"/><rect x="4.7" y="5" width="3.6" height="3" fill="#86afed"/><rect x="9.3" y="5" width="3.7" height="3" fill="#7fb0ea"/><rect x="0" y="9" width="3.7" height="4" fill="#7fb0ea"/><rect x="4.7" y="9" width="3.6" height="4" fill="#86afed"/><rect x="9.3" y="9" width="3.7" height="4" fill="#7fb0ea"/></svg><div class="t" style="left:124px;top:659.0px;font-size:13px;line-height:20px;color:#262626;letter-spacing:0.3px;">servers</div><svg style="left:105px;top:681px;" width="13" height="13" viewBox="0 0 13 13"><rect x="0" y="0" width="13" height="13" fill="#d2e6fb"/><rect x="0" y="0" width="13" height="4" fill="#87a8e8"/><rect x="0" y="5" width="3.7" height="3" fill="#7fb0ea"/><rect x="4.7" y="5" width="3.6" height="3" fill="#86afed"/><rect x="9.3" y="5" width="3.7" height="3" fill="#7fb0ea"/><rect x="0" y="9" width="3.7" height="4" fill="#7fb0ea"/><rect x="4.7" y="9" width="3.6" height="4" fill="#86afed"/><rect x="9.3" y="9" width="3.7" height="4" fill="#7fb0ea"/></svg><div class="t" style="left:124px;top:679.0px;font-size:13px;line-height:20px;color:#262626;letter-spacing:0.3px;">slave_master_info</div><svg style="left:105px;top:701px;" width="13" height="13" viewBox="0 0 13 13"><rect x="0" y="0" width="13" height="13" fill="#d2e6fb"/><rect x="0" y="0" width="13" height="4" fill="#87a8e8"/><rect x="0" y="5" width="3.7" height="3" fill="#7fb0ea"/><rect x="4.7" y="5" width="3.6" height="3" fill="#86afed"/><rect x="9.3" y="5" width="3.7" height="3" fill="#7fb0ea"/><rect x="0" y="9" width="3.7" height="4" fill="#7fb0ea"/><rect x="4.7" y="9" width="3.6" height="4" fill="#86afed"/><rect x="9.3" y="9" width="3.7" height="4" fill="#7fb0ea"/></svg><div class="t" style="left:124px;top:699.0px;font-size:13px;line-height:20px;color:#262626;letter-spacing:0.3px;">slave_relay_log_info</div><svg style="left:105px;top:721px;" width="13" height="13" viewBox="0 0 13 13"><rect x="0" y="0" width="13" height="13" fill="#d2e6fb"/><rect x="0" y="0" width="13" height="4" fill="#87a8e8"/><rect x="0" y="5" width="3.7" height="3" fill="#7fb0ea"/><rect x="4.7" y="5" width="3.6" height="3" fill="#86afed"/><rect x="9.3" y="5" width="3.7" height="3" fill="#7fb0ea"/><rect x="0" y="9" width="3.7" height="4" fill="#7fb0ea"/><rect x="4.7" y="9" width="3.6" height="4" fill="#86afed"/><rect x="9.3" y="9" width="3.7" height="4" fill="#7fb0ea"/></svg><div class="t" style="left:124px;top:719.0px;font-size:13px;line-height:20px;color:#262626;letter-spacing:0.3px;">slave_worker_info</div><svg style="left:105px;top:741px;" width="13" height="13" viewBox="0 0 13 13"><rect x="0" y="0" width="13" height="13" fill="#d2e6fb"/><rect x="0" y="0" width="13" height="4" fill="#87a8e8"/><rect x="0" y="5" width="3.7" height="3" fill="#7fb0ea"/><rect x="4.7" y="5" width="3.6" height="3" fill="#86afed"/><rect x="9.3" y="5" width="3.7" height="3" fill="#7fb0ea"/><rect x="0" y="9" width="3.7" height="4" fill="#7fb0ea"/><rect x="4.7" y="9" width="3.6" height="4" fill="#86afed"/><rect x="9.3" y="9" width="3.7" height="4" fill="#7fb0ea"/></svg><div class="t" style="left:124px;top:739.0px;font-size:13px;line-height:20px;color:#262626;letter-spacing:0.3px;">slow_log</div><svg style="left:105px;top:761px;" width="13" height="13" viewBox="0 0 13 13"><rect x="0" y="0" width="13" height="13" fill="#d2e6fb"/><rect x="0" y="0" width="13" height="4" fill="#87a8e8"/><rect x="0" y="5" width="3.7" height="3" fill="#7fb0ea"/><rect x="4.7" y="5" width="3.6" height="3" fill="#86afed"/><rect x="9.3" y="5" width="3.7" height="3" fill="#7fb0ea"/><rect x="0" y="9" width="3.7" height="4" fill="#7fb0ea"/><rect x="4.7" y="9" width="3.6" height="4" fill="#86afed"/><rect x="9.3" y="9" width="3.7" height="4" fill="#7fb0ea"/></svg><div class="t" style="left:124px;top:759.0px;font-size:13px;line-height:20px;color:#262626;letter-spacing:0.3px;">tables_priv</div><svg style="left:105px;top:781px;" width="13" height="13" viewBox="0 0 13 13"><rect x="0" y="0" width="13" height="13" fill="#d2e6fb"/><rect x="0" y="0" width="13" height="4" fill="#87a8e8"/><rect x="0" y="5" width="3.7" height="3" fill="#7fb0ea"/><rect x="4.7" y="5" width="3.6" height="3" fill="#86afed"/><rect x="9.3" y="5" width="3.7" height="3" fill="#7fb0ea"/><rect x="0" y="9" width="3.7" height="4" fill="#7fb0ea"/><rect x="4.7" y="9" width="3.6" height="4" fill="#86afed"/><rect x="9.3" y="9" width="3.7" height="4" fill="#7fb0ea"/></svg><div class="t" style="left:124px;top:779.0px;font-size:13px;line-height:20px;color:#262626;letter-spacing:0.3px;">time_zone</div><svg style="left:105px;top:801px;" width="13" height="13" viewBox="0 0 13 13"><rect x="0" y="0" width="13" height="13" fill="#d2e6fb"/><rect x="0" y="0" width="13" height="4" fill="#87a8e8"/><rect x="0" y="5" width="3.7" height="3" fill="#7fb0ea"/><rect x="4.7" y="5" width="3.6" height="3" fill="#86afed"/><rect x="9.3" y="5" width="3.7" height="3" fill="#7fb0ea"/><rect x="0" y="9" width="3.7" height="4" fill="#7fb0ea"/><rect x="4.7" y="9" width="3.6" height="4" fill="#86afed"/><rect x="9.3" y="9" width="3.7" height="4" fill="#7fb0ea"/></svg><div class="t" style="left:124px;top:799.0px;font-size:13px;line-height:20px;color:#262626;letter-spacing:0.3px;">time_zone_leap_second</div><svg style="left:105px;top:821px;" width="13" height="13" viewBox="0 0 13 13"><rect x="0" y="0" width="13" height="13" fill="#d2e6fb"/><rect x="0" y="0" width="13" height="4" fill="#87a8e8"/><rect x="0" y="5" width="3.7" height="3" fill="#7fb0ea"/><rect x="4.7" y="5" width="3.6" height="3" fill="#86afed"/><rect x="9.3" y="5" width="3.7" height="3" fill="#7fb0ea"/><rect x="0" y="9" width="3.7" height="4" fill="#7fb0ea"/><rect x="4.7" y="9" width="3.6" height="4" fill="#86afed"/><rect x="9.3" y="9" width="3.7" height="4" fill="#7fb0ea"/></svg><div class="t" style="left:124px;top:819.0px;font-size:13px;line-height:20px;color:#262626;letter-spacing:0.3px;">time_zone_name</div><svg style="left:105px;top:841px;" width="13" height="13" viewBox="0 0 13 13"><rect x="0" y="0" width="13" height="13" fill="#d2e6fb"/><rect x="0" y="0" width="13" height="4" fill="#87a8e8"/><rect x="0" y="5" width="3.7" height="3" fill="#7fb0ea"/><rect x="4.7" y="5" width="3.6" height="3" fill="#86afed"/><rect x="9.3" y="5" width="3.7" height="3" fill="#7fb0ea"/><rect x="0" y="9" width="3.7" height="4" fill="#7fb0ea"/><rect x="4.7" y="9" width="3.6" height="4" fill="#86afed"/><rect x="9.3" y="9" width="3.7" height="4" fill="#7fb0ea"/></svg><div class="t" style="left:124px;top:839.0px;font-size:13px;line-height:20px;color:#262626;letter-spacing:0.3px;">time_zone_transition</div><svg style="left:105px;top:861px;" width="13" height="13" viewBox="0 0 13 13"><rect x="0" y="0" width="13" height="13" fill="#d2e6fb"/><rect x="0" y="0" width="13" height="4" fill="#87a8e8"/><rect x="0" y="5" width="3.7" height="3" fill="#7fb0ea"/><rect x="4.7" y="5" width="3.6" height="3" fill="#86afed"/><rect x="9.3" y="5" width="3.7" height="3" fill="#7fb0ea"/><rect x="0" y="9" width="3.7" height="4" fill="#7fb0ea"/><rect x="4.7" y="9" width="3.6" height="4" fill="#86afed"/><rect x="9.3" y="9" width="3.7" height="4" fill="#7fb0ea"/></svg><div class="t" style="left:124px;top:859.0px;font-size:13px;line-height:20px;color:#262626;letter-spacing:0.3px;">time_zone_transition_type</div><svg style="left:105px;top:881px;" width="13" height="13" viewBox="0 0 13 13"><rect x="0" y="0" width="13" height="13" fill="#d2e6fb"/><rect x="0" y="0" width="13" height="4" fill="#87a8e8"/><rect x="0" y="5" width="3.7" height="3" fill="#7fb0ea"/><rect x="4.7" y="5" width="3.6" height="3" fill="#86afed"/><rect x="9.3" y="5" width="3.7" height="3" fill="#7fb0ea"/><rect x="0" y="9" width="3.7" height="4" fill="#7fb0ea"/><rect x="4.7" y="9" width="3.6" height="4" fill="#86afed"/><rect x="9.3" y="9" width="3.7" height="4" fill="#7fb0ea"/></svg><div class="t" style="left:124px;top:879.0px;font-size:13px;line-height:20px;color:#262626;letter-spacing:0.3px;">user</div><div class="a" style="left:89px;top:907px;width:46px;height:20px;background:#fff;border-radius:5px;box-shadow:0 0.5px 1.5px rgba(0,0,0,0.22)"></div><svg style="left:94px;top:911px;" width="13" height="13" viewBox="0 0 13 13"><path d="M6.5 1.5 V11.5 M1.5 6.5 H11.5" stroke="#333" stroke-width="1.3"/></svg><div class="a" style="left:113px;top:911px;width:1px;height:12px;background:#e2e2e2"></div><svg style="left:119px;top:914px;" width="11" height="7" viewBox="0 0 11 7"><path d="M1 1 L5.5 5.5 L10 1" fill="none" stroke="#444" stroke-width="1.3"/></svg><svg width="0" height="0" style="position:absolute"><defs><linearGradient id="fg" x1="0" y1="0" x2="0" y2="1"><stop offset="0" stop-color="#fbd35a"/><stop offset="1" stop-color="#eea336"/></linearGradient><linearGradient id="sg" x1="0" y1="0" x2="0" y2="1"><stop offset="0" stop-color="#fdf6b8"/><stop offset="0.55" stop-color="#f6df5a"/><stop offset="1" stop-color="#c9892a"/></linearGradient></defs></svg><div class="a" style="left:368px;top:39px;width:1069px;height:96px;background:#f0f0f0"></div><div class="a" style="left:368px;top:135px;width:1069px;height:1px;background:#dadada"></div><svg style="left:382px;top:51.8px;" width="13" height="13" viewBox="0 0 13 13"><rect x="0" y="0" width="12.2" height="12.2" rx="2.8" fill="#3580ef"/><path d="M2.3 6.5 L5.5 9.9 L9.6 2.6" fill="none" stroke="#fff" stroke-width="1.6" stroke-linecap="round" stroke-linejoin="round"/></svg><div class="a" style="left:406px;top:49.5px;width:108px;height:16.0px;background:#fff;border-radius:4px;box-shadow:0 0 0 0.5px rgba(0,0,0,0.12),0 0.8px 1px rgba(0,0,0,0.18)"></div><div class="t" style="left:406px;top:49.3px;font-size:12px;line-height:16px;color:#222;width:98px;text-align:center;">id</div><svg style="left:503px;top:53.3px;" width="7" height="9" viewBox="0 0 7 9"><path d="M1.2 3.2 L3.2 1.2 L5.2 3.2 M1.2 5.8 L3.2 7.8 L5.2 5.8" fill="none" stroke="#333" stroke-width="1.1"/></svg><div class="a" style="left:522px;top:49.5px;width:108px;height:16.0px;background:#fff;border-radius:4px;box-shadow:0 0 0 0.5px rgba(0,0,0,0.12),0 0.8px 1px rgba(0,0,0,0.18)"></div><div class="t" style="left:522px;top:49.3px;font-size:12px;line-height:16px;color:#222;width:98px;text-align:center;">&gt;</div><svg style="left:619px;top:53.3px;" width="7" height="9" viewBox="0 0 7 9"><path d="M1.2 3.2 L3.2 1.2 L5.2 3.2 M1.2 5.8 L3.2 7.8 L5.2 5.8" fill="none" stroke="#333" stroke-width="1.1"/></svg><div class="a" style="left:638px;top:48.5px;width:674px;height:18.0px;background:#ebf1df;border-radius:4px;border:0.5px solid #d9e0c8;box-shadow:0 0.6px 0 #c9d0ba"></div><div class="t" style="left:647px;top:50.0px;font-size:11.5px;line-height:16px;color:#353c2c;">100</div><div class="a" style="left:1319px;top:50px;width:52px;height:16px;background:#fff;border-radius:4px;box-shadow:0 0 0 0.5px rgba(0,0,0,0.12),0 0.8px 1px rgba(0,0,0,0.18)"></div><div class="t" style="left:1319px;top:50.0px;font-size:11.7px;line-height:16px;color:#222;width:52px;text-align:center;">Applied</div><div class="a" style="left:1379px;top:50px;width:20px;height:16px;background:#fff;border-radius:4px;box-shadow:0 0 0 0.5px rgba(0,0,0,0.12),0 0.8px 1px rgba(0,0,0,0.18)"></div><svg style="left:1384px;top:53px;" width="10" height="10" viewBox="0 0 10 10"><path d="M1 5 H9" stroke="#444" stroke-width="1.2"/></svg><div class="a" style="left:1406px;top:50px;width:20px;height:16px;background:#fff;border-radius:4px;box-shadow:0 0 0 0.5px rgba(0,0,0,0.12),0 0.8px 1px rgba(0,0,0,0.18)"></div><svg style="left:1411px;top:53px;" width="10" height="10" viewBox="0 0 10 10"><path d="M1 5 H9 M5 1 V9" stroke="#444" stroke-width="1.2"/></svg><svg style="left:382px;top:81.8px;" width="13" height="13" viewBox="0 0 13 13"><rect x="0" y="0" width="12.2" height="12.2" rx="2.8" fill="#3580ef"/><path d="M2.3 6.5 L5.5 9.9 L9.6 2.6" fill="none" stroke="#fff" stroke-width="1.6" stroke-linecap="round" stroke-linejoin="round"/></svg><div class="a" style="left:406px;top:79.5px;width:108px;height:16.0px;background:#fff;border-radius:4px;box-shadow:0 0 0 0.5px rgba(0,0,0,0.12),0 0.8px 1px rgba(0,0,0,0.18)"></div><div class="t" style="left:406px;top:79.3px;font-size:12px;line-height:16px;color:#222;width:98px;text-align:center;">id</div><svg style="left:503px;top:83.3px;" width="7" height="9" viewBox="0 0 7 9"><path d="M1.2 3.2 L3.2 1.2 L5.2 3.2 M1.2 5.8 L3.2 7.8 L5.2 5.8" fill="none" stroke="#333" stroke-width="1.1"/></svg><div class="a" style="left:522px;top:79.5px;width:108px;height:16.0px;background:#fff;border-radius:4px;box-shadow:0 0 0 0.5px rgba(0,0,0,0.12),0 0.8px 1px rgba(0,0,0,0.18)"></div><div class="t" style="left:522px;top:79.3px;font-size:12px;line-height:16px;color:#222;width:98px;text-align:center;">&lt;</div><svg style="left:619px;top:83.3px;" width="7" height="9" viewBox="0 0 7 9"><path d="M1.2 3.2 L3.2 1.2 L5.2 3.2 M1.2 5.8 L3.2 7.8 L5.2 5.8" fill="none" stroke="#333" stroke-width="1.1"/></svg><div class="a" style="left:638px;top:78.5px;width:674px;height:18.0px;background:#ebf1df;border-radius:4px;border:0.5px solid #d9e0c8;box-shadow:0 0.6px 0 #c9d0ba"></div><div class="t" style="left:647px;top:80.0px;font-size:11.5px;line-height:16px;color:#353c2c;">1000</div><div class="a" style="left:1319px;top:80px;width:52px;height:16px;background:#fff;border-radius:4px;box-shadow:0 0 0 0.5px rgba(0,0,0,0.12),0 0.8px 1px rgba(0,0,0,0.18)"></div><div class="t" style="left:1319px;top:80.0px;font-size:11.7px;line-height:16px;color:#222;width:52px;text-align:center;">Applied</div><div class="a" style="left:1379px;top:80px;width:20px;height:16px;background:#fff;border-radius:4px;box-shadow:0 0 0 0.5px rgba(0,0,0,0.12),0 0.8px 1px rgba(0,0,0,0.18)"></div><svg style="left:1384px;top:83px;" width="10" height="10" viewBox="0 0 10 10"><path d="M1 5 H9" stroke="#444" stroke-width="1.2"/></svg><div class="a" style="left:1406px;top:80px;width:20px;height:16px;background:#fff;border-radius:4px;box-shadow:0 0 0 0.5px rgba(0,0,0,0.12),0 0.8px 1px rgba(0,0,0,0.18)"></div><svg style="left:1411px;top:83px;" width="10" height="10" viewBox="0 0 10 10"><path d="M1 5 H9 M5 1 V9" stroke="#444" stroke-width="1.2"/></svg><svg style="left:380px;top:110px;" width="14" height="14" viewBox="0 0 14 14"><circle cx="7" cy="7" r="5.2" fill="#7a7a7a"/><rect x="5.65" y="-0.09999999999999964" width="2.7" height="3.3999999999999995" rx="0.6" fill="#7a7a7a" transform="rotate(0 7 7)"/><rect x="5.65" y="-0.09999999999999964" width="2.7" height="3.3999999999999995" rx="0.6" fill="#7a7a7a" transform="rotate(45 7 7)"/><rect x="5.65" y="-0.09999999999999964" width="2.7" height="3.3999999999999995" rx="0.6" fill="#7a7a7a" transform="rotate(90 7 7)"/><rect x="5.65" y="-0.09999999999999964" width="2.7" height="3.3999999999999995" rx="0.6" fill="#7a7a7a" transform="rotate(135 7 7)"/><rect x="5.65" y="-0.09999999999999964" width="2.7" height="3.3999999999999995" rx="0.6" fill="#7a7a7a" transform="rotate(180 7 7)"/><rect x="5.65" y="-0.09999999999999964" width="2.7" height="3.3999999999999995" rx="0.6" fill="#7a7a7a" transform="rotate(225 7 7)"/><rect x="5.65" y="-0.09999999999999964" width="2.7" height="3.3999999999999995" rx="0.6" fill="#7a7a7a" transform="rotate(270 7 7)"/><rect x="5.65" y="-0.09999999999999964" width="2.7" height="3.3999999999999995" rx="0.6" fill="#7a7a7a" transform="rotate(315 7 7)"/><circle cx="7" cy="7" r="1.9" fill="#f0f0f0"/></svg><div class="a" style="left:406px;top:109px;width:50px;height:16px;background:#fff;border-radius:4px;box-shadow:0 0 0 0.5px rgba(0,0,0,0.12),0 0.8px 1px rgba(0,0,0,0.18)"></div><div class="t" style="left:406px;top:109.0px;font-size:12px;line-height:16px;color:#222;width:50px;text-align:center;">Export</div><div class="a" style="left:464px;top:109px;width:50px;height:16px;background:#fff;border-radius:4px;box-shadow:0 0 0 0.5px rgba(0,0,0,0.12),0 0.8px 1px rgba(0,0,0,0.18)"></div><div class="t" style="left:464px;top:109.0px;font-size:12px;line-height:16px;color:#222;width:50px;text-align:center;">SQL</div><div class="t" style="left:524px;top:110.0px;font-size:11.5px;line-height:16px;color:#8a8a8a;">Show: <svg class="e" width="9" height="9" viewBox="0 0 9 9" style="vertical-align:-0.5px;margin:0 1px 0 0"><g fill="none" stroke="#888" stroke-width="0.95"><path d="M3 1.7 V7.3 M6 1.7 V7.3 M1.7 3 H7.3 M1.7 6 H7.3"/><circle cx="1.75" cy="1.75" r="1.25"/><circle cx="7.25" cy="1.75" r="1.25"/><circle cx="1.75" cy="7.25" r="1.25"/><circle cx="7.25" cy="7.25" r="1.25"/></g></svg>F</div><div class="t" style="left:588px;top:110.0px;font-size:11.5px;line-height:16px;color:#8a8a8a;">Insert: <svg class="e" width="9" height="9" viewBox="0 0 9 9" style="vertical-align:-0.5px;margin:0 1px 0 0"><g fill="none" stroke="#888" stroke-width="0.95"><path d="M3 1.7 V7.3 M6 1.7 V7.3 M1.7 3 H7.3 M1.7 6 H7.3"/><circle cx="1.75" cy="1.75" r="1.25"/><circle cx="7.25" cy="1.75" r="1.25"/><circle cx="1.75" cy="7.25" r="1.25"/><circle cx="7.25" cy="7.25" r="1.25"/></g></svg>I</div><div class="t" style="left:650px;top:110.0px;font-size:11.5px;line-height:16px;color:#8a8a8a;">Remove: <svg class="e" width="9" height="9" viewBox="0 0 9 9" style="vertical-align:-0.5px;margin:0 1px 0 0"><g fill="none" stroke="#888" stroke-width="0.95"><path d="M3 1.7 V7.3 M6 1.7 V7.3 M1.7 3 H7.3 M1.7 6 H7.3"/><circle cx="1.75" cy="1.75" r="1.25"/><circle cx="7.25" cy="1.75" r="1.25"/><circle cx="1.75" cy="7.25" r="1.25"/><circle cx="7.25" cy="7.25" r="1.25"/></g></svg><svg class="e" width="9" height="9" viewBox="0 0 9 9" style="vertical-align:0px;margin-right:1px"><path d="M4.5 0.8 L8.2 4.6 H6.2 V8.2 H2.8 V4.6 H0.8 Z" fill="none" stroke="#8a8a8a" stroke-width="0.9"/></svg>I</div><div class="t" style="left:735px;top:110.0px;font-size:11.5px;line-height:16px;color:#8a8a8a;">Apply All: <svg class="e" width="9" height="9" viewBox="0 0 9 9" style="vertical-align:-0.5px;margin:0 1px 0 0"><g fill="none" stroke="#888" stroke-width="0.95"><path d="M3 1.7 V7.3 M6 1.7 V7.3 M1.7 3 H7.3 M1.7 6 H7.3"/><circle cx="1.75" cy="1.75" r="1.25"/><circle cx="7.25" cy="1.75" r="1.25"/><circle cx="1.75" cy="7.25" r="1.25"/><circle cx="7.25" cy="7.25" r="1.25"/></g></svg>Return</div><div class="t" style="left:845px;top:110.0px;font-size:11.5px;line-height:16px;color:#8a8a8a;">Up: <svg class="e" width="9" height="9" viewBox="0 0 9 9" style="vertical-align:-0.5px;margin:0 1px 0 0"><g fill="none" stroke="#888" stroke-width="0.95"><path d="M3 1.7 V7.3 M6 1.7 V7.3 M1.7 3 H7.3 M1.7 6 H7.3"/><circle cx="1.75" cy="1.75" r="1.25"/><circle cx="7.25" cy="1.75" r="1.25"/><circle cx="1.75" cy="7.25" r="1.25"/><circle cx="7.25" cy="7.25" r="1.25"/></g></svg><svg class="e" width="8" height="9" viewBox="0 0 8 9" style="vertical-align:-0.5px;margin-left:0.5px"><g transform="rotate(0 4 4.5)"><path d="M4 8.3 V0.9 M0.9 4 L4 0.9 L7.1 4" fill="none" stroke="#8a8a8a" stroke-width="1"/></g></svg></div><div class="t" style="left:898px;top:110.0px;font-size:11.5px;line-height:16px;color:#8a8a8a;">Down: <svg class="e" width="9" height="9" viewBox="0 0 9 9" style="vertical-align:-0.5px;margin:0 1px 0 0"><g fill="none" stroke="#888" stroke-width="0.95"><path d="M3 1.7 V7.3 M6 1.7 V7.3 M1.7 3 H7.3 M1.7 6 H7.3"/><circle cx="1.75" cy="1.75" r="1.25"/><circle cx="7.25" cy="1.75" r="1.25"/><circle cx="1.75" cy="7.25" r="1.25"/><circle cx="7.25" cy="7.25" r="1.25"/></g></svg><svg class="e" width="8" height="9" viewBox="0 0 8 9" style="vertical-align:-0.5px;margin-left:0.5px"><g transform="rotate(180 4 4.5)"><path d="M4 8.3 V0.9 M0.9 4 L4 0.9 L7.1 4" fill="none" stroke="#8a8a8a" stroke-width="1"/></g></svg></div><div class="t" style="left:965px;top:110.0px;font-size:11.5px;line-height:16px;color:#8a8a8a;">Columns: <svg class="e" width="9" height="9" viewBox="0 0 9 9" style="vertical-align:-0.5px;margin:0 1px 0 0"><g fill="none" stroke="#888" stroke-width="0.95"><path d="M3 1.7 V7.3 M6 1.7 V7.3 M1.7 3 H7.3 M1.7 6 H7.3"/><circle cx="1.75" cy="1.75" r="1.25"/><circle cx="7.25" cy="1.75" r="1.25"/><circle cx="1.75" cy="7.25" r="1.25"/><circle cx="7.25" cy="7.25" r="1.25"/></g></svg><svg class="e" width="8" height="9" viewBox="0 0 8 9" style="vertical-align:-0.5px;margin-left:0.5px"><g transform="rotate(-90 4 4.5)"><path d="M4 8.3 V0.9 M0.9 4 L4 0.9 L7.1 4" fill="none" stroke="#8a8a8a" stroke-width="1"/></g></svg></div><div class="t" style="left:1051px;top:110.0px;font-size:11.5px;line-height:16px;color:#8a8a8a;">Operators: <svg class="e" width="9" height="9" viewBox="0 0 9 9" style="vertical-align:-0.5px;margin:0 1px 0 0"><g fill="none" stroke="#888" stroke-width="0.95"><path d="M3 1.7 V7.3 M6 1.7 V7.3 M1.7 3 H7.3 M1.7 6 H7.3"/><circle cx="1.75" cy="1.75" r="1.25"/><circle cx="7.25" cy="1.75" r="1.25"/><circle cx="1.75" cy="7.25" r="1.25"/><circle cx="7.25" cy="7.25" r="1.25"/></g></svg><svg class="e" width="8" height="9" viewBox="0 0 8 9" style="vertical-align:-0.5px;margin-left:0.5px"><g transform="rotate(90 4 4.5)"><path d="M4 8.3 V0.9 M0.9 4 L4 0.9 L7.1 4" fill="none" stroke="#8a8a8a" stroke-width="1"/></g></svg></div><div class="t" style="left:1142px;top:110.0px;font-size:11.5px;line-height:16px;color:#8a8a8a;">On/Off: <svg class="e" width="9" height="9" viewBox="0 0 9 9" style="vertical-align:-0.5px;margin:0 1px 0 0"><g fill="none" stroke="#888" stroke-width="0.95"><path d="M3 1.7 V7.3 M6 1.7 V7.3 M1.7 3 H7.3 M1.7 6 H7.3"/><circle cx="1.75" cy="1.75" r="1.25"/><circle cx="7.25" cy="1.75" r="1.25"/><circle cx="1.75" cy="7.25" r="1.25"/><circle cx="7.25" cy="7.25" r="1.25"/></g></svg>B</div><div class="t" style="left:1214px;top:109px;width:41px;overflow:hidden;font-size:11.5px;line-height:16px;color:#8a8a8a">Exit: Esc</div><div class="a" style="left:1261px;top:109px;width:50px;height:16px;background:#fff;border-radius:4px;box-shadow:0 0 0 0.5px rgba(0,0,0,0.12),0 0.8px 1px rgba(0,0,0,0.18)"></div><div class="t" style="left:1261px;top:109.0px;font-size:12px;line-height:16px;color:#222;width:50px;text-align:center;">Unset</div><div class="a" style="left:1319px;top:109px;width:106px;height:16px;background:#fff;border-radius:4px;box-shadow:0 0 0 0.5px rgba(0,0,0,0.12),0 0.8px 1px rgba(0,0,0,0.18)"></div><div class="t" style="left:1319px;top:109.0px;font-size:12px;line-height:16px;color:#222;width:80px;text-align:center;">Apply All</div><div class="a" style="left:1399px;top:112px;width:1px;height:11px;background:#e2e2e2"></div><svg style="left:1407px;top:114px;" width="11" height="7" viewBox="0 0 11 7"><path d="M1 1 L5.5 5.5 L10 1" fill="none" stroke="#444" stroke-width="1.3"/></svg><div class="a" style="left:368px;top:136px;width:1069px;height:763px;background:#fff"></div><div class="a" style="left:368px;top:163px;width:1052px;height:1px;background:#e2e2e2"></div><div class="a" style="left:1420px;top:163px;width:14px;height:1px;background:linear-gradient(90deg,#e2e2e2,#fff)"></div><div class="t" style="left:409px;top:142.0px;font-size:11px;line-height:16px;color:#222;font-weight:bold;width:397px;text-align:center;">comment</div><div class="t" style="left:806px;top:142.0px;font-size:11px;line-height:16px;color:#222;font-weight:bold;width:89px;text-align:center;">from_user_id</div><div class="t" style="left:895px;top:142.0px;font-size:11px;line-height:16px;color:#222;font-weight:bold;width:75px;text-align:center;">to_user_id</div><div class="t" style="left:970px;top:142.0px;font-size:11px;line-height:16px;color:#222;font-weight:bold;width:186px;text-align:center;">created_at</div><div class="t" style="left:1156px;top:142.0px;font-size:11px;line-height:16px;color:#222;font-weight:bold;width:186px;text-align:center;">updated_at</div><div class="t" style="left:1342px;top:142.0px;font-size:11px;line-height:16px;color:#222;font-weight:bold;width:59px;text-align:center;">item_id</div><div class="t" style="left:371px;top:142.0px;font-size:11px;line-height:16px;color:#222;font-weight:bold;width:41px;text-align:center;">id</div><div class="t" style="left:1410px;top:142px;width:11px;overflow:hidden;font-size:11px;line-height:16px;font-weight:bold;color:#222">is_</div><div class="a" style="left:409px;top:141px;width:1px;height:18px;background:#e6e6e6"></div><div class="a" style="left:806px;top:141px;width:1px;height:18px;background:#e6e6e6"></div><div class="a" style="left:895px;top:141px;width:1px;height:18px;background:#e6e6e6"></div><div class="a" style="left:970px;top:141px;width:1px;height:18px;background:#e6e6e6"></div><div class="a" style="left:1156px;top:141px;width:1px;height:18px;background:#e6e6e6"></div><div class="a" style="left:1342px;top:141px;width:1px;height:18px;background:#e6e6e6"></div><div class="a" style="left:1401px;top:141px;width:1px;height:18px;background:#e6e6e6"></div><div class="a" style="left:368px;top:188px;width:1069px;height:24px;background:#f5f5f5"></div><div class="a" style="left:368px;top:236px;width:1069px;height:24px;background:#f5f5f5"></div><div class="a" style="left:368px;top:284px;width:1069px;height:24px;background:#f5f5f5"></div><div class="a" style="left:368px;top:332px;width:1069px;height:24px;background:#f5f5f5"></div><div class="a" style="left:368px;top:380px;width:1069px;height:24px;background:#f5f5f5"></div><div class="a" style="left:368px;top:428px;width:1069px;height:24px;background:#f5f5f5"></div><div class="a" style="left:368px;top:476px;width:1069px;height:24px;background:#f5f5f5"></div><div class="a" style="left:368px;top:524px;width:1069px;height:24px;background:#f5f5f5"></div><div class="a" style="left:368px;top:572px;width:1069px;height:24px;background:#f5f5f5"></div><div class="a" style="left:368px;top:620px;width:1069px;height:24px;background:#f5f5f5"></div><div class="a" style="left:368px;top:668px;width:1069px;height:24px;background:#f5f5f5"></div><div class="a" style="left:368px;top:716px;width:1069px;height:24px;background:#f5f5f5"></div><div class="a" style="left:368px;top:764px;width:1069px;height:24px;background:#f5f5f5"></div><div class="a" style="left:368px;top:812px;width:1069px;height:24px;background:#f5f5f5"></div><div class="a" style="left:368px;top:860px;width:1069px;height:24px;background:#f5f5f5"></div><div class="a" style="left:409px;top:164px;width:1px;height:735px;background:#f1f1f1"></div><div class="a" style="left:806px;top:164px;width:1px;height:735px;background:#f1f1f1"></div><div class="a" style="left:895px;top:164px;width:1px;height:735px;background:#f1f1f1"></div><div class="a" style="left:970px;top:164px;width:1px;height:735px;background:#f1f1f1"></div><div class="a" style="left:1156px;top:164px;width:1px;height:735px;background:#f1f1f1"></div><div class="a" style="left:1342px;top:164px;width:1px;height:735px;background:#f1f1f1"></div><div class="a" style="left:1401px;top:164px;width:1px;height:735px;background:#f1f1f1"></div><div class="t" style="left:368px;top:166.0px;font-size:13px;line-height:20px;color:#1e1e1e;width:37px;text-align:right;">101</div><div class="t" style="left:413px;top:166.0px;font-size:13px;line-height:20px;color:#1e1e1e;letter-spacing:-0.18px;">So fly <svg class="e" width="16" height="16" viewBox="0 0 16 16" style="vertical-align:-3.5px;margin-left:0px;margin-right:0px"><ellipse cx="4.6" cy="10.4" rx="2.9" ry="4.6" transform="rotate(-12 4.6 10.4)" fill="#dcbf9f"/><ellipse cx="11.4" cy="10.4" rx="2.9" ry="4.6" transform="rotate(12 11.4 10.4)" fill="#d8bb9b"/><path d="M4.2 4.6 l0.9 -1.4 M6.6 4 l0.4 -1.4 M9.4 4 l-0.4 -1.4 M11.8 4.6 l-0.9 -1.4" stroke="#444" stroke-width="0.9"/></svg></div><div class="t" style="left:806px;top:166.0px;font-size:13px;line-height:20px;color:#1e1e1e;width:86px;text-align:right;">9429</div><div class="t" style="left:899px;top:166.0px;font-size:13px;line-height:20px;color:#1e1e1e;">2024</div><div class="t" style="left:973.5px;top:166.0px;font-size:13px;line-height:20px;color:#1e1e1e;letter-spacing:0.35px;">2015-11-21 22:12:54.754</div><div class="t" style="left:1160px;top:166.0px;font-size:13px;line-height:20px;color:#1e1e1e;letter-spacing:0.3px;">2015-12-08 15:30:56.841592</div><div class="t" style="left:1342px;top:166.0px;font-size:13px;line-height:20px;color:#1e1e1e;width:55px;text-align:right;">15245</div><div class="t" style="left:368px;top:190.0px;font-size:13px;line-height:20px;color:#1e1e1e;width:37px;text-align:right;">102</div><div class="t" style="left:413px;top:190.0px;font-size:13px;line-height:20px;color:#1e1e1e;letter-spacing:-0.18px;">This background is amazing<svg class="e" width="16" height="16" viewBox="0 0 16 16" style="vertical-align:-3.5px;margin-left:0px;margin-right:0px"><circle cx="8" cy="8" r="6.9" fill="url(#fg)"/><path d="M5 8.4 c-1.8 -1.2 -2.4 -2 -2.4 -2.9 c0 -1.2 1.6 -1.6 2.4 -0.4 c0.8 -1.2 2.4 -0.8 2.4 0.4 c0 0.9 -0.6 1.7 -2.4 2.9z M11 8.4 c-1.8 -1.2 -2.4 -2 -2.4 -2.9 c0 -1.2 1.6 -1.6 2.4 -0.4 c0.8 -1.2 2.4 -0.8 2.4 0.4 c0 0.9 -0.6 1.7 -2.4 2.9z" fill="#e8323c"/><path d="M4.6 10 Q8 13.6 11.4 10 Z" fill="#6b3a1e"/></svg></div><div class="t" style="left:806px;top:190.0px;font-size:13px;line-height:20px;color:#1e1e1e;width:86px;text-align:right;">5757</div><div class="t" style="left:899px;top:190.0px;font-size:13px;line-height:20px;color:#1e1e1e;">1654</div><div class="t" style="left:973.5px;top:190.0px;font-size:13px;line-height:20px;color:#1e1e1e;letter-spacing:0.35px;">2015-08-10 21:23:57.505</div><div class="t" style="left:1160px;top:190.0px;font-size:13px;line-height:20px;color:#1e1e1e;letter-spacing:0.3px;">2015-12-08 15:30:56.866218</div><div class="t" style="left:1342px;top:190.0px;font-size:13px;line-height:20px;color:#1e1e1e;width:55px;text-align:right;">4659</div><div class="t" style="left:368px;top:214.0px;font-size:13px;line-height:20px;color:#1e1e1e;width:37px;text-align:right;">103</div><div class="t" style="left:413px;top:214.0px;font-size:13px;line-height:20px;color:#1e1e1e;letter-spacing:-0.18px;">Love this dress so much <svg class="e" width="16" height="16" viewBox="0 0 16 16" style="vertical-align:-3.5px;margin-left:0px;margin-right:0px"><circle cx="8" cy="8" r="6.9" fill="url(#fg)"/><path d="M5 8.4 c-1.8 -1.2 -2.4 -2 -2.4 -2.9 c0 -1.2 1.6 -1.6 2.4 -0.4 c0.8 -1.2 2.4 -0.8 2.4 0.4 c0 0.9 -0.6 1.7 -2.4 2.9z M11 8.4 c-1.8 -1.2 -2.4 -2 -2.4 -2.9 c0 -1.2 1.6 -1.6 2.4 -0.4 c0.8 -1.2 2.4 -0.8 2.4 0.4 c0 0.9 -0.6 1.7 -2.4 2.9z" fill="#e8323c"/><path d="M4.6 10 Q8 13.6 11.4 10 Z" fill="#6b3a1e"/></svg> so nice for summer!</div><div class="t" style="left:806px;top:214.0px;font-size:13px;line-height:20px;color:#1e1e1e;width:86px;text-align:right;">7308</div><div class="t" style="left:899px;top:214.0px;font-size:13px;line-height:20px;color:#1e1e1e;">12082</div><div class="t" style="left:973.5px;top:214.0px;font-size:13px;line-height:20px;color:#1e1e1e;letter-spacing:0.35px;">2015-08-14 17:09:42.024</div><div class="t" style="left:1160px;top:214.0px;font-size:13px;line-height:20px;color:#1e1e1e;letter-spacing:0.3px;">2015-12-08 15:30:56.902289</div><div class="t" style="left:1342px;top:214.0px;font-size:13px;line-height:20px;color:#1e1e1e;width:55px;text-align:right;">7070</div><div class="t" style="left:368px;top:238.0px;font-size:13px;line-height:20px;color:#1e1e1e;width:37px;text-align:right;">105</div><div class="t" style="left:413px;top:238.0px;font-size:13px;line-height:20px;color:#1e1e1e;letter-spacing:-0.18px;">Love!</div><div class="t" style="left:806px;top:238.0px;font-size:13px;line-height:20px;color:#1e1e1e;width:86px;text-align:right;">5569</div><div class="t" style="left:899px;top:238.0px;font-size:13px;line-height:20px;color:#1e1e1e;">2777</div><div class="t" style="left:973.5px;top:238.0px;font-size:13px;line-height:20px;color:#1e1e1e;letter-spacing:0.35px;">2015-12-06 10:37:39.44</div><div class="t" style="left:1160px;top:238.0px;font-size:13px;line-height:20px;color:#1e1e1e;letter-spacing:0.3px;">2015-12-08 15:30:56.984729</div><div class="t" style="left:1342px;top:238.0px;font-size:13px;line-height:20px;color:#1e1e1e;width:55px;text-align:right;">16285</div><div class="t" style="left:368px;top:262.0px;font-size:13px;line-height:20px;color:#1e1e1e;width:37px;text-align:right;">106</div><div class="t" style="left:413px;top:262.0px;font-size:13px;line-height:20px;color:#1e1e1e;letter-spacing:-0.18px;">Thank u @emily</div><div class="t" style="left:806px;top:262.0px;font-size:13px;line-height:20px;color:#1e1e1e;width:86px;text-align:right;">94</div><div class="t" style="left:899px;top:262.0px;font-size:13px;line-height:20px;color:#1e1e1e;">94</div><div class="t" style="left:973.5px;top:262.0px;font-size:13px;line-height:20px;color:#1e1e1e;letter-spacing:0.35px;">2015-10-11 20:39:56.992</div><div class="t" style="left:1160px;top:262.0px;font-size:13px;line-height:20px;color:#1e1e1e;letter-spacing:0.3px;">2015-12-08 15:30:57.031655</div><div class="t" style="left:1342px;top:262.0px;font-size:13px;line-height:20px;color:#1e1e1e;width:55px;text-align:right;">11832</div><div class="t" style="left:368px;top:286.0px;font-size:13px;line-height:20px;color:#1e1e1e;width:37px;text-align:right;">107</div><div class="t" style="left:413px;top:286.0px;font-size:13px;line-height:20px;color:#1e1e1e;letter-spacing:-0.18px;"><svg class="e" width="16" height="16" viewBox="0 0 16 16" style="vertical-align:-3.5px;margin-left:0px;margin-right:1px"><path d="M8 14.2 C3.2 10.8 1 8.4 1 5.4 C1 3.2 2.7 1.6 4.6 1.6 C6.1 1.6 7.3 2.5 8 3.7 C8.7 2.5 9.9 1.6 11.4 1.6 C13.3 1.6 15 3.2 15 5.4 C15 8.4 12.8 10.8 8 14.2 Z" fill="#e8323c" stroke="#b91e25" stroke-width="0.4"/><ellipse cx="4.8" cy="4.6" rx="1.4" ry="1" fill="#fff" opacity="0.35"/></svg><svg class="e" width="16" height="16" viewBox="0 0 16 16" style="vertical-align:-3.5px;margin-left:0px;margin-right:1px"><path d="M8 14.2 C3.2 10.8 1 8.4 1 5.4 C1 3.2 2.7 1.6 4.6 1.6 C6.1 1.6 7.3 2.5 8 3.7 C8.7 2.5 9.9 1.6 11.4 1.6 C13.3 1.6 15 3.2 15 5.4 C15 8.4 12.8 10.8 8 14.2 Z" fill="#e8323c" stroke="#b91e25" stroke-width="0.4"/><ellipse cx="4.8" cy="4.6" rx="1.4" ry="1" fill="#fff" opacity="0.35"/></svg><svg class="e" width="16" height="16" viewBox="0 0 16 16" style="vertical-align:-3.5px;margin-left:0px;margin-right:1px"><path d="M8 14.2 C3.2 10.8 1 8.4 1 5.4 C1 3.2 2.7 1.6 4.6 1.6 C6.1 1.6 7.3 2.5 8 3.7 C8.7 2.5 9.9 1.6 11.4 1.6 C13.3 1.6 15 3.2 15 5.4 C15 8.4 12.8 10.8 8 14.2 Z" fill="#e8323c" stroke="#b91e25" stroke-width="0.4"/><ellipse cx="4.8" cy="4.6" rx="1.4" ry="1" fill="#fff" opacity="0.35"/></svg></div><div class="t" style="left:806px;top:286.0px;font-size:13px;line-height:20px;color:#1e1e1e;width:86px;text-align:right;">5569</div><div class="t" style="left:899px;top:286.0px;font-size:13px;line-height:20px;color:#1e1e1e;">5216</div><div class="t" style="left:973.5px;top:286.0px;font-size:13px;line-height:20px;color:#1e1e1e;letter-spacing:0.35px;">2015-11-24 22:02:58.828</div><div class="t" style="left:1160px;top:286.0px;font-size:13px;line-height:20px;color:#1e1e1e;letter-spacing:0.3px;">2015-12-08 15:30:57.072241</div><div class="t" style="left:1342px;top:286.0px;font-size:13px;line-height:20px;color:#1e1e1e;width:55px;text-align:right;">15451</div><div class="t" style="left:368px;top:310.0px;font-size:13px;line-height:20px;color:#1e1e1e;width:37px;text-align:right;">108</div><div class="t" style="left:413px;top:310.0px;font-size:13px;line-height:20px;color:#1e1e1e;letter-spacing:-0.18px;">Love the glasses!</div><div class="t" style="left:806px;top:310.0px;font-size:13px;line-height:20px;color:#1e1e1e;width:86px;text-align:right;">4347</div><div class="t" style="left:899px;top:310.0px;font-size:13px;line-height:20px;color:#1e1e1e;">7239</div><div class="t" style="left:973.5px;top:310.0px;font-size:13px;line-height:20px;color:#1e1e1e;letter-spacing:0.35px;">2015-08-01 14:24:44.783</div><div class="t" style="left:1160px;top:310.0px;font-size:13px;line-height:20px;color:#1e1e1e;letter-spacing:0.3px;">2015-12-08 15:30:57.105485</div><div class="t" style="left:1342px;top:310.0px;font-size:13px;line-height:20px;color:#1e1e1e;width:55px;text-align:right;">5465</div><div class="t" style="left:368px;top:334.0px;font-size:13px;line-height:20px;color:#1e1e1e;width:37px;text-align:right;">109</div><div class="t" style="left:413px;top:334.0px;font-size:13px;line-height:20px;color:#1e1e1e;letter-spacing:-0.18px;">Supercool<svg class="e" width="16" height="16" viewBox="0 0 16 16" style="vertical-align:-3.5px;margin-left:0px;margin-right:1px"><path d="M8 0.8 L9.3 5 L13.6 2.6 L11 6.6 L15.2 8 L11 9.4 L13.6 13.4 L9.3 11 L8 15.2 L6.7 11 L2.4 13.4 L5 9.4 L0.8 8 L5 6.6 L2.4 2.6 L6.7 5 Z" fill="#f05a28"/><path d="M8 3.6 L8.9 6.4 L11.6 5.2 L10 7.4 L12.4 8 L10 8.8 L11.4 11 L8.9 9.7 L8 12.4 L7.1 9.7 L4.6 11 L6 8.8 L3.6 8 L6 7.4 L4.4 5.2 L7.1 6.4 Z" fill="#fbd24d"/></svg><svg class="e" width="16" height="16" viewBox="0 0 16 16" style="vertical-align:-3.5px;margin-left:0px;margin-right:1px"><path d="M8 0.8 L9.3 5 L13.6 2.6 L11 6.6 L15.2 8 L11 9.4 L13.6 13.4 L9.3 11 L8 15.2 L6.7 11 L2.4 13.4 L5 9.4 L0.8 8 L5 6.6 L2.4 2.6 L6.7 5 Z" fill="#f05a28"/><path d="M8 3.6 L8.9 6.4 L11.6 5.2 L10 7.4 L12.4 8 L10 8.8 L11.4 11 L8.9 9.7 L8 12.4 L7.1 9.7 L4.6 11 L6 8.8 L3.6 8 L6 7.4 L4.4 5.2 L7.1 6.4 Z" fill="#fbd24d"/></svg><svg class="e" width="16" height="16" viewBox="0 0 16 16" style="vertical-align:-3.5px;margin-left:0px;margin-right:1px"><path d="M8 0.8 L9.3 5 L13.6 2.6 L11 6.6 L15.2 8 L11 9.4 L13.6 13.4 L9.3 11 L8 15.2 L6.7 11 L2.4 13.4 L5 9.4 L0.8 8 L5 6.6 L2.4 2.6 L6.7 5 Z" fill="#f05a28"/><path d="M8 3.6 L8.9 6.4 L11.6 5.2 L10 7.4 L12.4 8 L10 8.8 L11.4 11 L8.9 9.7 L8 12.4 L7.1 9.7 L4.6 11 L6 8.8 L3.6 8 L6 7.4 L4.4 5.2 L7.1 6.4 Z" fill="#fbd24d"/></svg></div><div class="t" style="left:806px;top:334.0px;font-size:13px;line-height:20px;color:#1e1e1e;width:86px;text-align:right;">2609</div><div class="t" style="left:899px;top:334.0px;font-size:13px;line-height:20px;color:#1e1e1e;">4820</div><div class="t" style="left:973.5px;top:334.0px;font-size:13px;line-height:20px;color:#1e1e1e;letter-spacing:0.35px;">2015-09-04 09:28:30.842</div><div class="t" style="left:1160px;top:334.0px;font-size:13px;line-height:20px;color:#1e1e1e;letter-spacing:0.3px;">2015-12-08 15:30:57.140823</div><div class="t" style="left:1342px;top:334.0px;font-size:13px;line-height:20px;color:#1e1e1e;width:55px;text-align:right;">8873</div><div class="t" style="left:368px;top:358.0px;font-size:13px;line-height:20px;color:#1e1e1e;width:37px;text-align:right;">110</div><div class="t" style="left:413px;top:358.0px;font-size:13px;line-height:20px;color:#1e1e1e;letter-spacing:-0.18px;">Would love to! @mith <svg class="e" width="16" height="16" viewBox="0 0 16 16" style="vertical-align:-3.5px;margin-left:0px;margin-right:0px"><circle cx="8" cy="8" r="6.9" fill="url(#fg)"/><ellipse cx="5.6" cy="6" rx="0.9" ry="1.3" fill="#5a3a1a"/><ellipse cx="10.4" cy="6" rx="0.9" ry="1.3" fill="#5a3a1a"/><path d="M3.8 9 Q8 12.8 12.2 9 Q8 10.4 3.8 9Z" fill="#fff" stroke="#6b3a1e" stroke-width="0.6"/></svg></div><div class="t" style="left:806px;top:358.0px;font-size:13px;line-height:20px;color:#1e1e1e;width:86px;text-align:right;">5027</div><div class="t" style="left:899px;top:358.0px;font-size:13px;line-height:20px;color:#1e1e1e;">5027</div><div class="t" style="left:973.5px;top:358.0px;font-size:13px;line-height:20px;color:#1e1e1e;letter-spacing:0.35px;">2015-08-18 20:27:10.945</div><div class="t" style="left:1160px;top:358.0px;font-size:13px;line-height:20px;color:#1e1e1e;letter-spacing:0.3px;">2015-12-08 15:30:57.166027</div><div class="t" style="left:1342px;top:358.0px;font-size:13px;line-height:20px;color:#1e1e1e;width:55px;text-align:right;">6029</div><div class="t" style="left:368px;top:382.0px;font-size:13px;line-height:20px;color:#1e1e1e;width:37px;text-align:right;">111</div><div class="t" style="left:413px;top:382.0px;font-size:13px;line-height:20px;color:#1e1e1e;letter-spacing:-0.18px;">Love the blouse!</div><div class="t" style="left:806px;top:382.0px;font-size:13px;line-height:20px;color:#1e1e1e;width:86px;text-align:right;">4118</div><div class="t" style="left:899px;top:382.0px;font-size:13px;line-height:20px;color:#1e1e1e;">186</div><div class="t" style="left:973.5px;top:382.0px;font-size:13px;line-height:20px;color:#1e1e1e;letter-spacing:0.35px;">2015-08-18 23:00:33.919</div><div class="t" style="left:1160px;top:382.0px;font-size:13px;line-height:20px;color:#1e1e1e;letter-spacing:0.3px;">2015-12-08 15:30:57.203625</div><div class="t" style="left:1342px;top:382.0px;font-size:13px;line-height:20px;color:#1e1e1e;width:55px;text-align:right;">7454</div><div class="t" style="left:368px;top:406.0px;font-size:13px;line-height:20px;color:#1e1e1e;width:37px;text-align:right;">112</div><div class="t" style="left:413px;top:406.0px;font-size:13px;line-height:20px;color:#1e1e1e;letter-spacing:-0.18px;"><svg class="e" width="16" height="16" viewBox="0 0 16 16" style="vertical-align:-3.5px;margin-left:0px;margin-right:1px"><path d="M3.2 2.4 L5.4 5 M12.8 2.4 L10.6 5 M1.2 7 L3.6 7.6 M14.8 7 L12.4 7.6 M8 1 V3.4" stroke="#f3e39a" stroke-width="1.3"/><path d="M8 3.4 L9.6 6.6 L13 7.2 L10.6 9.6 L11.2 13.2 L8 11.6 L4.8 13.2 L5.4 9.6 L3 7.2 L6.4 6.6 Z" fill="url(#sg)"/></svg><svg class="e" width="16" height="16" viewBox="0 0 16 16" style="vertical-align:-3.5px;margin-left:0px;margin-right:1px"><path d="M3.2 2.4 L5.4 5 M12.8 2.4 L10.6 5 M1.2 7 L3.6 7.6 M14.8 7 L12.4 7.6 M8 1 V3.4" stroke="#f3e39a" stroke-width="1.3"/><path d="M8 3.4 L9.6 6.6 L13 7.2 L10.6 9.6 L11.2 13.2 L8 11.6 L4.8 13.2 L5.4 9.6 L3 7.2 L6.4 6.6 Z" fill="url(#sg)"/></svg><svg class="e" width="16" height="16" viewBox="0 0 16 16" style="vertical-align:-3.5px;margin-left:0px;margin-right:1px"><path d="M3.2 2.4 L5.4 5 M12.8 2.4 L10.6 5 M1.2 7 L3.6 7.6 M14.8 7 L12.4 7.6 M8 1 V3.4" stroke="#f3e39a" stroke-width="1.3"/><path d="M8 3.4 L9.6 6.6 L13 7.2 L10.6 9.6 L11.2 13.2 L8 11.6 L4.8 13.2 L5.4 9.6 L3 7.2 L6.4 6.6 Z" fill="url(#sg)"/></svg></div><div class="t" style="left:806px;top:406.0px;font-size:13px;line-height:20px;color:#1e1e1e;width:86px;text-align:right;">5569</div><div class="t" style="left:899px;top:406.0px;font-size:13px;line-height:20px;color:#1e1e1e;">4877</div><div class="t" style="left:973.5px;top:406.0px;font-size:13px;line-height:20px;color:#1e1e1e;letter-spacing:0.35px;">2015-11-30 12:54:49.735</div><div class="t" style="left:1160px;top:406.0px;font-size:13px;line-height:20px;color:#1e1e1e;letter-spacing:0.3px;">2015-12-08 15:30:57.244144</div><div class="t" style="left:1342px;top:406.0px;font-size:13px;line-height:20px;color:#1e1e1e;width:55px;text-align:right;">15914</div><div class="t" style="left:368px;top:430.0px;font-size:13px;line-height:20px;color:#1e1e1e;width:37px;text-align:right;">113</div><div class="t" style="left:413px;top:430.0px;font-size:13px;line-height:20px;color:#1e1e1e;letter-spacing:-0.18px;">Love that jacket! Outfit is fab <svg class="e" width="16" height="16" viewBox="0 0 16 16" style="vertical-align:-3.5px;margin-left:0px;margin-right:0px"><ellipse cx="4.6" cy="10.4" rx="2.9" ry="4.6" transform="rotate(-12 4.6 10.4)" fill="#dcbf9f"/><ellipse cx="11.4" cy="10.4" rx="2.9" ry="4.6" transform="rotate(12 11.4 10.4)" fill="#d8bb9b"/><path d="M4.2 4.6 l0.9 -1.4 M6.6 4 l0.4 -1.4 M9.4 4 l-0.4 -1.4 M11.8 4.6 l-0.9 -1.4" stroke="#444" stroke-width="0.9"/></svg></div><div class="t" style="left:806px;top:430.0px;font-size:13px;line-height:20px;color:#1e1e1e;width:86px;text-align:right;">7308</div><div class="t" style="left:899px;top:430.0px;font-size:13px;line-height:20px;color:#1e1e1e;">3075</div><div class="t" style="left:973.5px;top:430.0px;font-size:13px;line-height:20px;color:#1e1e1e;letter-spacing:0.35px;">2015-08-24 19:09:34.776</div><div class="t" style="left:1160px;top:430.0px;font-size:13px;line-height:20px;color:#1e1e1e;letter-spacing:0.3px;">2015-12-08 15:30:57.280947</div><div class="t" style="left:1342px;top:430.0px;font-size:13px;line-height:20px;color:#1e1e1e;width:55px;text-align:right;">8037</div><div class="t" style="left:368px;top:454.0px;font-size:13px;line-height:20px;color:#1e1e1e;width:37px;text-align:right;">114</div><div class="t" style="left:413px;top:454.0px;font-size:13px;line-height:20px;color:#1e1e1e;letter-spacing:-0.18px;">Jacket <svg class="e" width="16" height="16" viewBox="0 0 16 16" style="vertical-align:-3.5px;margin-left:0px;margin-right:0px"><path d="M8 15 C4 15 2.6 12.4 2.6 10 C2.6 7 5 5.4 5.6 2.6 C7.4 3.6 8.2 5.4 8 7 C9 6 9.6 4.8 9.6 3.6 C12.2 5.6 13.4 8 13.4 10.4 C13.4 13 11.6 15 8 15 Z" fill="#f4511e"/><path d="M8 15 C6 15 5.2 13.6 5.2 12.2 C5.2 10.6 6.6 9.6 7 8 C8 8.8 8.4 9.6 8.4 10.4 C9.2 10 9.6 9.4 9.8 8.8 C10.8 10 11 11.2 11 12.2 C11 13.8 9.8 15 8 15Z" fill="#ffc53d"/></svg></div><div class="t" style="left:806px;top:454.0px;font-size:13px;line-height:20px;color:#1e1e1e;width:86px;text-align:right;">1780</div><div class="t" style="left:899px;top:454.0px;font-size:13px;line-height:20px;color:#1e1e1e;">1365</div><div class="t" style="left:973.5px;top:454.0px;font-size:13px;line-height:20px;color:#1e1e1e;letter-spacing:0.35px;">2015-07-12 06:20:07.091</div><div class="t" style="left:1160px;top:454.0px;font-size:13px;line-height:20px;color:#1e1e1e;letter-spacing:0.3px;">2015-12-08 15:30:57.307644</div><div class="t" style="left:1342px;top:454.0px;font-size:13px;line-height:20px;color:#1e1e1e;width:55px;text-align:right;">2538</div><div class="t" style="left:368px;top:478.0px;font-size:13px;line-height:20px;color:#1e1e1e;width:37px;text-align:right;">115</div><div class="t" style="left:413px;top:478.0px;font-size:13px;line-height:20px;color:#1e1e1e;letter-spacing:-0.18px;"><svg class="e" width="16" height="16" viewBox="0 0 16 16" style="vertical-align:-3.5px;margin-left:0px;margin-right:1px"><path d="M8 14.2 C3.2 10.8 1 8.4 1 5.4 C1 3.2 2.7 1.6 4.6 1.6 C6.1 1.6 7.3 2.5 8 3.7 C8.7 2.5 9.9 1.6 11.4 1.6 C13.3 1.6 15 3.2 15 5.4 C15 8.4 12.8 10.8 8 14.2 Z" fill="#f6c641" stroke="#d9a21e" stroke-width="0.4"/><ellipse cx="4.8" cy="4.6" rx="1.4" ry="1" fill="#fff" opacity="0.35"/></svg><svg class="e" width="16" height="16" viewBox="0 0 16 16" style="vertical-align:-3.5px;margin-left:0px;margin-right:1px"><path d="M8 14.2 C3.2 10.8 1 8.4 1 5.4 C1 3.2 2.7 1.6 4.6 1.6 C6.1 1.6 7.3 2.5 8 3.7 C8.7 2.5 9.9 1.6 11.4 1.6 C13.3 1.6 15 3.2 15 5.4 C15 8.4 12.8 10.8 8 14.2 Z" fill="#f6c641" stroke="#d9a21e" stroke-width="0.4"/><ellipse cx="4.8" cy="4.6" rx="1.4" ry="1" fill="#fff" opacity="0.35"/></svg><svg class="e" width="16" height="16" viewBox="0 0 16 16" style="vertical-align:-3.5px;margin-left:0px;margin-right:1px"><path d="M8 14.2 C3.2 10.8 1 8.4 1 5.4 C1 3.2 2.7 1.6 4.6 1.6 C6.1 1.6 7.3 2.5 8 3.7 C8.7 2.5 9.9 1.6 11.4 1.6 C13.3 1.6 15 3.2 15 5.4 C15 8.4 12.8 10.8 8 14.2 Z" fill="#f6c641" stroke="#d9a21e" stroke-width="0.4"/><ellipse cx="4.8" cy="4.6" rx="1.4" ry="1" fill="#fff" opacity="0.35"/></svg></div><div class="t" style="left:806px;top:478.0px;font-size:13px;line-height:20px;color:#1e1e1e;width:86px;text-align:right;">5569</div><div class="t" style="left:899px;top:478.0px;font-size:13px;line-height:20px;color:#1e1e1e;">5969</div><div class="t" style="left:973.5px;top:478.0px;font-size:13px;line-height:20px;color:#1e1e1e;letter-spacing:0.35px;">2015-09-13 14:44:32.209</div><div class="t" style="left:1160px;top:478.0px;font-size:13px;line-height:20px;color:#1e1e1e;letter-spacing:0.3px;">2015-12-08 15:30:57.34342</div><div class="t" style="left:1342px;top:478.0px;font-size:13px;line-height:20px;color:#1e1e1e;width:55px;text-align:right;">9382</div><div class="t" style="left:368px;top:502.0px;font-size:13px;line-height:20px;color:#1e1e1e;width:37px;text-align:right;">116</div><div class="t" style="left:413px;top:502.0px;font-size:13px;line-height:20px;color:#1e1e1e;letter-spacing:-0.18px;">@emily thank you soooo much beautiful!!!! To God Be The Glory!!!!</div><div class="t" style="left:806px;top:502.0px;font-size:13px;line-height:20px;color:#1e1e1e;width:86px;text-align:right;">12431</div><div class="t" style="left:899px;top:502.0px;font-size:13px;line-height:20px;color:#1e1e1e;">12431</div><div class="t" style="left:973.5px;top:502.0px;font-size:13px;line-height:20px;color:#1e1e1e;letter-spacing:0.35px;">2015-10-30 13:55:18.745</div><div class="t" style="left:1160px;top:502.0px;font-size:13px;line-height:20px;color:#1e1e1e;letter-spacing:0.3px;">2015-12-08 15:30:57.373218</div><div class="t" style="left:1342px;top:502.0px;font-size:13px;line-height:20px;color:#1e1e1e;width:55px;text-align:right;">13256</div><div class="t" style="left:368px;top:526.0px;font-size:13px;line-height:20px;color:#1e1e1e;width:37px;text-align:right;">117</div><div class="t" style="left:413px;top:526.0px;font-size:13px;line-height:20px;color:#1e1e1e;letter-spacing:-0.18px;">you are so pretty x</div><div class="t" style="left:806px;top:526.0px;font-size:13px;line-height:20px;color:#1e1e1e;width:86px;text-align:right;">8180</div><div class="t" style="left:899px;top:526.0px;font-size:13px;line-height:20px;color:#1e1e1e;">12005</div><div class="t" style="left:973.5px;top:526.0px;font-size:13px;line-height:20px;color:#1e1e1e;letter-spacing:0.35px;">2015-10-11 18:28:20.447</div><div class="t" style="left:1160px;top:526.0px;font-size:13px;line-height:20px;color:#1e1e1e;letter-spacing:0.3px;">2015-12-08 15:30:57.408816</div><div class="t" style="left:1342px;top:526.0px;font-size:13px;line-height:20px;color:#1e1e1e;width:55px;text-align:right;">11829</div><div class="t" style="left:368px;top:550.0px;font-size:13px;line-height:20px;color:#1e1e1e;width:37px;text-align:right;">118</div><div class="t" style="left:413px;top:550.0px;font-size:13px;line-height:20px;color:#1e1e1e;letter-spacing:-0.18px;">Ur legs are to die for<svg class="e" width="16" height="16" viewBox="0 0 16 16" style="vertical-align:-3.5px;margin-left:0px;margin-right:1px"><ellipse cx="4.6" cy="10.4" rx="2.9" ry="4.6" transform="rotate(-12 4.6 10.4)" fill="#f5c33b"/><ellipse cx="11.4" cy="10.4" rx="2.9" ry="4.6" transform="rotate(12 11.4 10.4)" fill="#f0bb32"/><path d="M4.2 4.6 l0.9 -1.4 M6.6 4 l0.4 -1.4 M9.4 4 l-0.4 -1.4 M11.8 4.6 l-0.9 -1.4" stroke="#444" stroke-width="0.9"/></svg><svg class="e" width="16" height="16" viewBox="0 0 16 16" style="vertical-align:-3.5px;margin-left:0px;margin-right:0px"><path d="M8 14.2 C3.2 10.8 1 8.4 1 5.4 C1 3.2 2.7 1.6 4.6 1.6 C6.1 1.6 7.3 2.5 8 3.7 C8.7 2.5 9.9 1.6 11.4 1.6 C13.3 1.6 15 3.2 15 5.4 C15 8.4 12.8 10.8 8 14.2 Z" fill="#ec4f9d"/><path d="M5 6 l0.5 1.2 l1.2 0.5 l-1.2 0.5 l-0.5 1.2 l-0.5 -1.2 l-1.2 -0.5 l1.2 -0.5z M11 4.4 l0.4 0.9 l0.9 0.4 l-0.9 0.4 l-0.4 0.9 l-0.4 -0.9 l-0.9 -0.4 l0.9 -0.4z" fill="#ffd3ea"/></svg></div><div class="t" style="left:806px;top:550.0px;font-size:13px;line-height:20px;color:#1e1e1e;width:86px;text-align:right;">9940</div><div class="t" style="left:899px;top:550.0px;font-size:13px;line-height:20px;color:#1e1e1e;">7239</div><div class="t" style="left:973.5px;top:550.0px;font-size:13px;line-height:20px;color:#1e1e1e;letter-spacing:0.35px;">2015-08-05 13:26:43.077</div><div class="t" style="left:1160px;top:550.0px;font-size:13px;line-height:20px;color:#1e1e1e;letter-spacing:0.3px;">2015-12-08 15:30:57.443741</div><div class="t" style="left:1342px;top:550.0px;font-size:13px;line-height:20px;color:#1e1e1e;width:55px;text-align:right;">5978</div><div class="t" style="left:368px;top:574.0px;font-size:13px;line-height:20px;color:#1e1e1e;width:37px;text-align:right;">119</div><div class="t" style="left:413px;top:574.0px;font-size:13px;line-height:20px;color:#1e1e1e;letter-spacing:-0.18px;">Thank you beautiful @laurel</div><div class="t" style="left:806px;top:574.0px;font-size:13px;line-height:20px;color:#1e1e1e;width:86px;text-align:right;">5559</div><div class="t" style="left:899px;top:574.0px;font-size:13px;line-height:20px;color:#1e1e1e;">5559</div><div class="t" style="left:973.5px;top:574.0px;font-size:13px;line-height:20px;color:#1e1e1e;letter-spacing:0.35px;">2015-10-01 22:05:51.961</div><div class="t" style="left:1160px;top:574.0px;font-size:13px;line-height:20px;color:#1e1e1e;letter-spacing:0.3px;">2015-12-08 15:30:57.480509</div><div class="t" style="left:1342px;top:574.0px;font-size:13px;line-height:20px;color:#1e1e1e;width:55px;text-align:right;">10937</div><div class="t" style="left:368px;top:598.0px;font-size:13px;line-height:20px;color:#1e1e1e;width:37px;text-align:right;">120</div><div class="t" style="left:413px;top:598.0px;font-size:13px;line-height:20px;color:#1e1e1e;letter-spacing:-0.18px;">Thank you! <svg class="e" width="16" height="16" viewBox="0 0 16 16" style="vertical-align:-3.5px;margin-left:0px;margin-right:0px"><circle cx="8" cy="8" r="6.9" fill="url(#fg)"/><path d="M4 6.2 q1.4 -1 2.6 0" fill="none" stroke="#5a3a1a" stroke-width="0.8"/><path d="M9.6 5.4 l2 1 l-2 0.8" fill="none" stroke="#5a3a1a" stroke-width="0.8"/><path d="M7.6 9.2 q1.4 0.6 0 1.2 q1.4 0.6 0 1.2" fill="none" stroke="#5a3a1a" stroke-width="0.7"/><path d="M12.2 12.8 c-1.6 -1 -2 -1.7 -2 -2.4 c0 -1 1.3 -1.3 2 -0.3 c0.7 -1 2 -0.7 2 0.3 c0 0.7 -0.4 1.4 -2 2.4z" fill="#e8323c"/></svg></div><div class="t" style="left:806px;top:598.0px;font-size:13px;line-height:20px;color:#1e1e1e;width:86px;text-align:right;">11123</div><div class="t" style="left:899px;top:598.0px;font-size:13px;line-height:20px;color:#1e1e1e;">11123</div><div class="t" style="left:973.5px;top:598.0px;font-size:13px;line-height:20px;color:#1e1e1e;letter-spacing:0.35px;">2015-10-11 13:20:46.351</div><div class="t" style="left:1160px;top:598.0px;font-size:13px;line-height:20px;color:#1e1e1e;letter-spacing:0.3px;">2015-12-08 15:30:57.523717</div><div class="t" style="left:1342px;top:598.0px;font-size:13px;line-height:20px;color:#1e1e1e;width:55px;text-align:right;">11756</div><div class="t" style="left:368px;top:622.0px;font-size:13px;line-height:20px;color:#1e1e1e;width:37px;text-align:right;">121</div><div class="t" style="left:413px;top:622.0px;font-size:13px;line-height:20px;color:#1e1e1e;letter-spacing:-0.18px;">Love this!</div><div class="t" style="left:806px;top:622.0px;font-size:13px;line-height:20px;color:#1e1e1e;width:86px;text-align:right;">5569</div><div class="t" style="left:899px;top:622.0px;font-size:13px;line-height:20px;color:#1e1e1e;">8691</div><div class="t" style="left:973.5px;top:622.0px;font-size:13px;line-height:20px;color:#1e1e1e;letter-spacing:0.35px;">2015-10-22 09:42:05.573</div><div class="t" style="left:1160px;top:622.0px;font-size:13px;line-height:20px;color:#1e1e1e;letter-spacing:0.3px;">2015-12-08 15:30:57.573733</div><div class="t" style="left:1342px;top:622.0px;font-size:13px;line-height:20px;color:#1e1e1e;width:55px;text-align:right;">12659</div><div class="t" style="left:368px;top:646.0px;font-size:13px;line-height:20px;color:#1e1e1e;width:37px;text-align:right;">122</div><div class="t" style="left:413px;top:646.0px;font-size:13px;line-height:20px;color:#1e1e1e;letter-spacing:-0.18px;">Amazing pastel theme <svg class="e" width="16" height="16" viewBox="0 0 16 16" style="vertical-align:-3.5px;margin-left:0px;margin-right:0px"><circle cx="8" cy="8" r="6.9" fill="url(#fg)"/><ellipse cx="5.6" cy="6" rx="0.9" ry="1.2" fill="#5a3a1a"/><ellipse cx="10.4" cy="6" rx="0.9" ry="1.2" fill="#5a3a1a"/><rect x="3.6" y="8.8" width="8.8" height="3.2" rx="1.6" fill="#fff" stroke="#6b3a1e" stroke-width="0.6"/><path d="M3.8 10.4 H12.2 M6 8.9 V12 M8 8.9 V12 M10 8.9 V12" stroke="#999" stroke-width="0.4"/></svg></div><div class="t" style="left:806px;top:646.0px;font-size:13px;line-height:20px;color:#1e1e1e;width:86px;text-align:right;">5757</div><div class="t" style="left:899px;top:646.0px;font-size:13px;line-height:20px;color:#1e1e1e;">5879</div><div class="t" style="left:973.5px;top:646.0px;font-size:13px;line-height:20px;color:#1e1e1e;letter-spacing:0.35px;">2015-08-13 20:59:06.623</div><div class="t" style="left:1160px;top:646.0px;font-size:13px;line-height:20px;color:#1e1e1e;letter-spacing:0.3px;">2015-12-08 15:30:57.605037</div><div class="t" style="left:1342px;top:646.0px;font-size:13px;line-height:20px;color:#1e1e1e;width:55px;text-align:right;">6929</div><div class="t" style="left:368px;top:670.0px;font-size:13px;line-height:20px;color:#1e1e1e;width:37px;text-align:right;">123</div><div class="t" style="left:413px;top:670.0px;font-size:13px;line-height:20px;color:#1e1e1e;letter-spacing:-0.18px;">Love! <svg class="e" width="16" height="16" viewBox="0 0 16 16" style="vertical-align:-3.5px;margin-left:0px;margin-right:1px"><path d="M6.5 3 L7.8 7.2 L12 8.5 L7.8 9.8 L6.5 14 L5.2 9.8 L1 8.5 L5.2 7.2 Z" fill="#fbe27c"/><path d="M12.6 1 L13.2 2.8 L15 3.4 L13.2 4 L12.6 5.8 L12 4 L10.2 3.4 L12 2.8 Z" fill="#f8d24e"/></svg><svg class="e" width="16" height="16" viewBox="0 0 16 16" style="vertical-align:-3.5px;margin-left:0px;margin-right:1px"><path d="M6.5 3 L7.8 7.2 L12 8.5 L7.8 9.8 L6.5 14 L5.2 9.8 L1 8.5 L5.2 7.2 Z" fill="#fbe27c"/><path d="M12.6 1 L13.2 2.8 L15 3.4 L13.2 4 L12.6 5.8 L12 4 L10.2 3.4 L12 2.8 Z" fill="#f8d24e"/></svg></div><div class="t" style="left:806px;top:670.0px;font-size:13px;line-height:20px;color:#1e1e1e;width:86px;text-align:right;">5569</div><div class="t" style="left:899px;top:670.0px;font-size:13px;line-height:20px;color:#1e1e1e;">6334</div><div class="t" style="left:973.5px;top:670.0px;font-size:13px;line-height:20px;color:#1e1e1e;letter-spacing:0.35px;">2015-11-21 14:13:57.187</div><div class="t" style="left:1160px;top:670.0px;font-size:13px;line-height:20px;color:#1e1e1e;letter-spacing:0.3px;">2015-12-08 15:30:57.641314</div><div class="t" style="left:1342px;top:670.0px;font-size:13px;line-height:20px;color:#1e1e1e;width:55px;text-align:right;">15194</div><div class="t" style="left:368px;top:694.0px;font-size:13px;line-height:20px;color:#1e1e1e;width:37px;text-align:right;">124</div><div class="t" style="left:413px;top:694.0px;font-size:13px;line-height:20px;color:#1e1e1e;letter-spacing:-0.18px;">Beautiful!! <svg class="e" width="16" height="16" viewBox="0 0 16 16" style="vertical-align:-3.5px;margin-left:0px;margin-right:1px"><path d="M5.6 15 C2.4 12.8 1 11.2 1 9.2 C1 7.8 2.1 6.8 3.3 6.8 C4.3 6.8 5.1 7.4 5.6 8.2 C6.1 7.4 6.9 6.8 7.9 6.8 C9.1 6.8 10.2 7.8 10.2 9.2 C10.2 11.2 8.8 12.8 5.6 15Z" fill="#ec4f9d"/><path d="M11.6 8 C9.6 6.6 8.7 5.6 8.7 4.3 C8.7 3.4 9.4 2.8 10.2 2.8 C10.8 2.8 11.3 3.2 11.6 3.7 C11.9 3.2 12.4 2.8 13 2.8 C13.8 2.8 14.5 3.4 14.5 4.3 C14.5 5.6 13.6 6.6 11.6 8Z" fill="#ec4f9d"/></svg><svg class="e" width="16" height="16" viewBox="0 0 16 16" style="vertical-align:-3.5px;margin-left:0px;margin-right:1px"><path d="M5.6 15 C2.4 12.8 1 11.2 1 9.2 C1 7.8 2.1 6.8 3.3 6.8 C4.3 6.8 5.1 7.4 5.6 8.2 C6.1 7.4 6.9 6.8 7.9 6.8 C9.1 6.8 10.2 7.8 10.2 9.2 C10.2 11.2 8.8 12.8 5.6 15Z" fill="#ec4f9d"/><path d="M11.6 8 C9.6 6.6 8.7 5.6 8.7 4.3 C8.7 3.4 9.4 2.8 10.2 2.8 C10.8 2.8 11.3 3.2 11.6 3.7 C11.9 3.2 12.4 2.8 13 2.8 C13.8 2.8 14.5 3.4 14.5 4.3 C14.5 5.6 13.6 6.6 11.6 8Z" fill="#ec4f9d"/></svg></div><div class="t" style="left:806px;top:694.0px;font-size:13px;line-height:20px;color:#1e1e1e;width:86px;text-align:right;">5569</div><div class="t" style="left:899px;top:694.0px;font-size:13px;line-height:20px;color:#1e1e1e;">5733</div><div class="t" style="left:973.5px;top:694.0px;font-size:13px;line-height:20px;color:#1e1e1e;letter-spacing:0.35px;">2015-11-04 12:24:41.227</div><div class="t" style="left:1160px;top:694.0px;font-size:13px;line-height:20px;color:#1e1e1e;letter-spacing:0.3px;">2015-12-08 15:30:57.684731</div><div class="t" style="left:1342px;top:694.0px;font-size:13px;line-height:20px;color:#1e1e1e;width:55px;text-align:right;">13680</div><div class="t" style="left:368px;top:718.0px;font-size:13px;line-height:20px;color:#1e1e1e;width:37px;text-align:right;">125</div><div class="t" style="left:413px;top:718.0px;font-size:13px;line-height:20px;color:#1e1e1e;letter-spacing:-0.18px;">Love this photo! Your hair is gorgeous <svg class="e" width="16" height="16" viewBox="0 0 16 16" style="vertical-align:-3.5px;margin-left:0px;margin-right:0px"><circle cx="8" cy="8" r="6.9" fill="url(#fg)"/><path d="M4 6.2 q1.4 -1 2.6 0" fill="none" stroke="#5a3a1a" stroke-width="0.8"/><path d="M9.6 5.4 l2 1 l-2 0.8" fill="none" stroke="#5a3a1a" stroke-width="0.8"/><path d="M7.6 9.2 q1.4 0.6 0 1.2 q1.4 0.6 0 1.2" fill="none" stroke="#5a3a1a" stroke-width="0.7"/><path d="M12.2 12.8 c-1.6 -1 -2 -1.7 -2 -2.4 c0 -1 1.3 -1.3 2 -0.3 c0.7 -1 2 -0.7 2 0.3 c0 0.7 -0.4 1.4 -2 2.4z" fill="#e8323c"/></svg> x</div><div class="t" style="left:806px;top:718.0px;font-size:13px;line-height:20px;color:#1e1e1e;width:86px;text-align:right;">7237</div><div class="t" style="left:899px;top:718.0px;font-size:13px;line-height:20px;color:#1e1e1e;">8957</div><div class="t" style="left:973.5px;top:718.0px;font-size:13px;line-height:20px;color:#1e1e1e;letter-spacing:0.35px;">2015-08-26 16:03:27.513</div><div class="t" style="left:1160px;top:718.0px;font-size:13px;line-height:20px;color:#1e1e1e;letter-spacing:0.3px;">2015-12-08 15:30:57.715562</div><div class="t" style="left:1342px;top:718.0px;font-size:13px;line-height:20px;color:#1e1e1e;width:55px;text-align:right;">8011</div><div class="t" style="left:368px;top:742.0px;font-size:13px;line-height:20px;color:#1e1e1e;width:37px;text-align:right;">126</div><div class="t" style="left:413px;top:742.0px;font-size:13px;line-height:20px;color:#1e1e1e;letter-spacing:-0.18px;">@Emily Thank you<svg class="e" width="16" height="16" viewBox="0 0 16 16" style="vertical-align:-3.5px;margin-left:0px;margin-right:0px"><path d="M6.2 2.8 Q8 1.2 9.6 2.6 Q9.2 4.8 7.4 5 Q6 4.6 6.2 2.8Z" fill="#2a1a14"/><path d="M8 5 L11 3 M10.4 3.2 L12 1.6" stroke="#d9a27c" stroke-width="0.8"/><path d="M7.6 5 L9.4 5.4 L10 9 Q13.6 8.4 15.2 9.8 Q13.8 13.4 10 13.6 L7 13.8 Q3.6 13.6 2.4 11.8 Q4.8 11 6.8 10.2 Z" fill="#b3202a"/><path d="M10 9.4 Q13.6 8.6 15.2 9.8 Q13.8 13.2 10.6 13.4 Z" fill="#6e0c16"/><path d="M7 13.6 L6.6 15.4 M9.6 13.6 L10.6 15.2" stroke="#444" stroke-width="0.8"/></svg></div><div class="t" style="left:806px;top:742.0px;font-size:13px;line-height:20px;color:#1e1e1e;width:86px;text-align:right;">11936</div><div class="t" style="left:899px;top:742.0px;font-size:13px;line-height:20px;color:#1e1e1e;">11936</div><div class="t" style="left:973.5px;top:742.0px;font-size:13px;line-height:20px;color:#1e1e1e;letter-spacing:0.35px;">2015-11-27 10:58:46.792</div><div class="t" style="left:1160px;top:742.0px;font-size:13px;line-height:20px;color:#1e1e1e;letter-spacing:0.3px;">2015-12-08 15:30:57.762048</div><div class="t" style="left:1342px;top:742.0px;font-size:13px;line-height:20px;color:#1e1e1e;width:55px;text-align:right;">15661</div><div class="t" style="left:368px;top:766.0px;font-size:13px;line-height:20px;color:#1e1e1e;width:37px;text-align:right;">127</div><div class="t" style="left:413px;top:766.0px;font-size:13px;line-height:20px;color:#1e1e1e;letter-spacing:-0.18px;">Stunning!</div><div class="t" style="left:806px;top:766.0px;font-size:13px;line-height:20px;color:#1e1e1e;width:86px;text-align:right;">12141</div><div class="t" style="left:899px;top:766.0px;font-size:13px;line-height:20px;color:#1e1e1e;">8303</div><div class="t" style="left:973.5px;top:766.0px;font-size:13px;line-height:20px;color:#1e1e1e;letter-spacing:0.35px;">2015-11-13 22:30:16.253</div><div class="t" style="left:1160px;top:766.0px;font-size:13px;line-height:20px;color:#1e1e1e;letter-spacing:0.3px;">2015-12-08 15:30:57.808192</div><div class="t" style="left:1342px;top:766.0px;font-size:13px;line-height:20px;color:#1e1e1e;width:55px;text-align:right;">14524</div><div class="t" style="left:368px;top:790.0px;font-size:13px;line-height:20px;color:#1e1e1e;width:37px;text-align:right;">128</div><div class="t" style="left:413px;top:790.0px;font-size:13px;line-height:20px;color:#1e1e1e;letter-spacing:-0.18px;"><svg class="e" width="16" height="16" viewBox="0 0 16 16" style="vertical-align:-3.5px;margin-left:0px;margin-right:1px"><path d="M8 14.2 C3.2 10.8 1 8.4 1 5.4 C1 3.2 2.7 1.6 4.6 1.6 C6.1 1.6 7.3 2.5 8 3.7 C8.7 2.5 9.9 1.6 11.4 1.6 C13.3 1.6 15 3.2 15 5.4 C15 8.4 12.8 10.8 8 14.2 Z" fill="#e8323c" stroke="#b91e25" stroke-width="0.4"/><ellipse cx="4.8" cy="4.6" rx="1.4" ry="1" fill="#fff" opacity="0.35"/></svg><svg class="e" width="16" height="16" viewBox="0 0 16 16" style="vertical-align:-3.5px;margin-left:0px;margin-right:1px"><path d="M8 14.2 C3.2 10.8 1 8.4 1 5.4 C1 3.2 2.7 1.6 4.6 1.6 C6.1 1.6 7.3 2.5 8 3.7 C8.7 2.5 9.9 1.6 11.4 1.6 C13.3 1.6 15 3.2 15 5.4 C15 8.4 12.8 10.8 8 14.2 Z" fill="#e8323c" stroke="#b91e25" stroke-width="0.4"/><ellipse cx="4.8" cy="4.6" rx="1.4" ry="1" fill="#fff" opacity="0.35"/></svg><svg class="e" width="16" height="16" viewBox="0 0 16 16" style="vertical-align:-3.5px;margin-left:0px;margin-right:1px"><path d="M8 14.2 C3.2 10.8 1 8.4 1 5.4 C1 3.2 2.7 1.6 4.6 1.6 C6.1 1.6 7.3 2.5 8 3.7 C8.7 2.5 9.9 1.6 11.4 1.6 C13.3 1.6 15 3.2 15 5.4 C15 8.4 12.8 10.8 8 14.2 Z" fill="#e8323c" stroke="#b91e25" stroke-width="0.4"/><ellipse cx="4.8" cy="4.6" rx="1.4" ry="1" fill="#fff" opacity="0.35"/></svg></div><div class="t" style="left:806px;top:790.0px;font-size:13px;line-height:20px;color:#1e1e1e;width:86px;text-align:right;">5569</div><div class="t" style="left:899px;top:790.0px;font-size:13px;line-height:20px;color:#1e1e1e;">7308</div><div class="t" style="left:973.5px;top:790.0px;font-size:13px;line-height:20px;color:#1e1e1e;letter-spacing:0.35px;">2015-10-15 10:02:47.99</div><div class="t" style="left:1160px;top:790.0px;font-size:13px;line-height:20px;color:#1e1e1e;letter-spacing:0.3px;">2015-12-08 15:30:57.855466</div><div class="t" style="left:1342px;top:790.0px;font-size:13px;line-height:20px;color:#1e1e1e;width:55px;text-align:right;">12145</div><div class="t" style="left:368px;top:814.0px;font-size:13px;line-height:20px;color:#1e1e1e;width:37px;text-align:right;">129</div><div class="t" style="left:413px;top:814.0px;font-size:13px;line-height:20px;color:#1e1e1e;letter-spacing:-0.18px;">Beautiful action shot!</div><div class="t" style="left:806px;top:814.0px;font-size:13px;line-height:20px;color:#1e1e1e;width:86px;text-align:right;">7372</div><div class="t" style="left:899px;top:814.0px;font-size:13px;line-height:20px;color:#1e1e1e;">9946</div><div class="t" style="left:973.5px;top:814.0px;font-size:13px;line-height:20px;color:#1e1e1e;letter-spacing:0.35px;">2015-08-14 15:15:21.247</div><div class="t" style="left:1160px;top:814.0px;font-size:13px;line-height:20px;color:#1e1e1e;letter-spacing:0.3px;">2015-12-08 15:30:57.893964</div><div class="t" style="left:1342px;top:814.0px;font-size:13px;line-height:20px;color:#1e1e1e;width:55px;text-align:right;">2893</div><div class="t" style="left:368px;top:838.0px;font-size:13px;line-height:20px;color:#1e1e1e;width:37px;text-align:right;">130</div><div class="t" style="left:413px;top:838.0px;font-size:13px;line-height:20px;color:#1e1e1e;letter-spacing:-0.18px;"><svg class="e" width="16" height="16" viewBox="0 0 16 16" style="vertical-align:-3.5px;margin-left:0px;margin-right:1px"><path d="M8 14.2 C3.2 10.8 1 8.4 1 5.4 C1 3.2 2.7 1.6 4.6 1.6 C6.1 1.6 7.3 2.5 8 3.7 C8.7 2.5 9.9 1.6 11.4 1.6 C13.3 1.6 15 3.2 15 5.4 C15 8.4 12.8 10.8 8 14.2 Z" fill="#e8323c" stroke="#b91e25" stroke-width="0.4"/><ellipse cx="4.8" cy="4.6" rx="1.4" ry="1" fill="#fff" opacity="0.35"/></svg><svg class="e" width="16" height="16" viewBox="0 0 16 16" style="vertical-align:-3.5px;margin-left:0px;margin-right:1px"><path d="M8 14.2 C3.2 10.8 1 8.4 1 5.4 C1 3.2 2.7 1.6 4.6 1.6 C6.1 1.6 7.3 2.5 8 3.7 C8.7 2.5 9.9 1.6 11.4 1.6 C13.3 1.6 15 3.2 15 5.4 C15 8.4 12.8 10.8 8 14.2 Z" fill="#e8323c" stroke="#b91e25" stroke-width="0.4"/><ellipse cx="4.8" cy="4.6" rx="1.4" ry="1" fill="#fff" opacity="0.35"/></svg></div><div class="t" style="left:806px;top:838.0px;font-size:13px;line-height:20px;color:#1e1e1e;width:86px;text-align:right;">8995</div><div class="t" style="left:899px;top:838.0px;font-size:13px;line-height:20px;color:#1e1e1e;">9001</div><div class="t" style="left:973.5px;top:838.0px;font-size:13px;line-height:20px;color:#1e1e1e;letter-spacing:0.35px;">2015-08-07 19:43:50.923</div><div class="t" style="left:1160px;top:838.0px;font-size:13px;line-height:20px;color:#1e1e1e;letter-spacing:0.3px;">2015-12-08 15:30:57.926282</div><div class="t" style="left:1342px;top:838.0px;font-size:13px;line-height:20px;color:#1e1e1e;width:55px;text-align:right;">6464</div><div class="t" style="left:368px;top:862.0px;font-size:13px;line-height:20px;color:#1e1e1e;width:37px;text-align:right;">131</div><div class="t" style="left:413px;top:862.0px;font-size:13px;line-height:20px;color:#1e1e1e;letter-spacing:-0.18px;"><svg class="e" width="16" height="16" viewBox="0 0 16 16" style="vertical-align:-3.5px;margin-left:0px;margin-right:0px"><g fill="#f7b8d2" stroke="#e88fb5" stroke-width="0.5"><circle cx="8" cy="3.6" r="3"/><circle cx="12.3" cy="6.8" r="3"/><circle cx="10.6" cy="11.8" r="3"/><circle cx="5.4" cy="11.8" r="3"/><circle cx="3.7" cy="6.8" r="3"/></g><circle cx="8" cy="8.2" r="2" fill="#fbe0ec"/><circle cx="8" cy="8.2" r="1" fill="#e0a33d"/></svg></div><div class="t" style="left:806px;top:862.0px;font-size:13px;line-height:20px;color:#1e1e1e;width:86px;text-align:right;">5569</div><div class="t" style="left:899px;top:862.0px;font-size:13px;line-height:20px;color:#1e1e1e;">7910</div><div class="t" style="left:973.5px;top:862.0px;font-size:13px;line-height:20px;color:#1e1e1e;letter-spacing:0.35px;">2015-08-24 21:08:52.771</div><div class="t" style="left:1160px;top:862.0px;font-size:13px;line-height:20px;color:#1e1e1e;letter-spacing:0.3px;">2015-12-08 15:30:57.962664</div><div class="t" style="left:1342px;top:862.0px;font-size:13px;line-height:20px;color:#1e1e1e;width:55px;text-align:right;">8074</div><div class="t" style="left:368px;top:886.0px;font-size:13px;line-height:20px;color:#1e1e1e;width:37px;text-align:right;">132</div><div class="t" style="left:413px;top:886.0px;font-size:13px;line-height:20px;color:#1e1e1e;letter-spacing:-0.18px;">Love that jumper! <svg class="e" width="16" height="16" viewBox="0 0 16 16" style="vertical-align:-3.5px;margin-left:0px;margin-right:0px"><path d="M1.4 12 C1.6 6.6 5 4 9 4.8 C8.6 9 6 12 1.4 12Z" fill="#b5651d"/><path d="M6 14.6 C6.6 10.2 10 8.6 14.6 10.4 C13 14 9.6 15.4 6 14.6Z" fill="#a0521a"/><path d="M9.4 1.4 C12.2 2.6 13.2 5.2 12.2 8.2 C10 6.8 9 4.4 9.4 1.4Z" fill="#c77a2c"/></svg></div><div class="t" style="left:806px;top:886.0px;font-size:13px;line-height:20px;color:#1e1e1e;width:86px;text-align:right;">8995</div><div class="t" style="left:899px;top:886.0px;font-size:13px;line-height:20px;color:#1e1e1e;">4118</div><div class="t" style="left:973.5px;top:886.0px;font-size:13px;line-height:20px;color:#1e1e1e;letter-spacing:0.35px;">2015-10-24 18:15:03.692</div><div class="t" style="left:1160px;top:886.0px;font-size:13px;line-height:20px;color:#1e1e1e;letter-spacing:0.3px;">2015-12-08 15:30:57.99569</div><div class="t" style="left:1342px;top:886.0px;font-size:13px;line-height:20px;color:#1e1e1e;width:55px;text-align:right;">12884</div><div class="a" style="left:368px;top:899px;width:1069px;height:36px;background:#f0f0f0"></div><div class="a" style="left:368px;top:899px;width:1069px;height:1px;background:#e0e0e0"></div><div class="a" style="left:380px;top:907px;width:124px;height:20px;background:#e3e3e3;border-radius:5px"></div><div class="a" style="left:380px;top:907px;width:61px;height:20px;background:#fff;border-radius:4px;box-shadow:0 0 0 0.5px rgba(0,0,0,0.12),0 0.8px 1px rgba(0,0,0,0.18);border-radius:5px"></div><div class="t" style="left:380px;top:909.5px;font-size:12.5px;line-height:16px;color:#222;width:61px;text-align:center;">Data</div><div class="t" style="left:441px;top:909.5px;font-size:12.5px;line-height:16px;color:#222;width:63px;text-align:center;">Structure</div><div class="a" style="left:514px;top:907px;width:76px;height:20px;background:#fff;border-radius:4px;box-shadow:0 0 0 0.5px rgba(0,0,0,0.12),0 0.8px 1px rgba(0,0,0,0.18);border-radius:5px"></div><svg style="left:522px;top:910px;" width="14" height="14" viewBox="0 0 14 14"><path d="M7 1.5 V12.5 M1.5 7 H12.5" stroke="#333" stroke-width="1.3"/></svg><div class="t" style="left:547px;top:909.5px;font-size:12.5px;line-height:16px;color:#222;">Row</div><div class="t" style="left:825px;top:910.0px;font-size:13px;line-height:16px;color:#8a8a8a;letter-spacing:0.05px;">1-300 of 859 rows</div><div class="a" style="left:1157px;top:907px;width:76px;height:20px;background:#fff;border-radius:4px;box-shadow:0 0 0 0.5px rgba(0,0,0,0.12),0 0.8px 1px rgba(0,0,0,0.18);border-radius:5px"></div><div class="t" style="left:1157px;top:908.8px;font-size:12.5px;line-height:16px;color:#222;width:76px;text-align:center;">Columns</div><div class="a" style="left:1243px;top:907px;width:76px;height:20px;background:linear-gradient(#4a8ef8,#2f77f2);border-radius:5px;box-shadow:0 0.5px 1px rgba(0,0,0,0.2)"></div><div class="t" style="left:1243px;top:908.8px;font-size:12px;line-height:16px;color:#fff;font-weight:bold;width:76px;text-align:center;">Filters</div><div class="a" style="left:1329px;top:907px;width:98px;height:20px;background:#fff;border-radius:4px;box-shadow:0 0 0 0.5px rgba(0,0,0,0.12),0 0.8px 1px rgba(0,0,0,0.18);border-radius:5px"></div><div class="a" style="left:1362px;top:911px;width:1px;height:12px;background:#e4e4e4"></div><div class="a" style="left:1395px;top:911px;width:1px;height:12px;background:#e4e4e4"></div><svg style="left:1340px;top:911px;" width="8" height="12" viewBox="0 0 8 12"><path d="M6 1 L1.6 6 L6 11" fill="none" stroke="#bdbdbd" stroke-width="1.3"/></svg><svg style="left:1371px;top:909.5px;" width="14" height="14" viewBox="0 0 14 14"><circle cx="7" cy="7" r="5.2" fill="#262626"/><rect x="5.65" y="-0.09999999999999964" width="2.7" height="3.3999999999999995" rx="0.6" fill="#262626" transform="rotate(0 7 7)"/><rect x="5.65" y="-0.09999999999999964" width="2.7" height="3.3999999999999995" rx="0.6" fill="#262626" transform="rotate(45 7 7)"/><rect x="5.65" y="-0.09999999999999964" width="2.7" height="3.3999999999999995" rx="0.6" fill="#262626" transform="rotate(90 7 7)"/><rect x="5.65" y="-0.09999999999999964" width="2.7" height="3.3999999999999995" rx="0.6" fill="#262626" transform="rotate(135 7 7)"/><rect x="5.65" y="-0.09999999999999964" width="2.7" height="3.3999999999999995" rx="0.6" fill="#262626" transform="rotate(180 7 7)"/><rect x="5.65" y="-0.09999999999999964" width="2.7" height="3.3999999999999995" rx="0.6" fill="#262626" transform="rotate(225 7 7)"/><rect x="5.65" y="-0.09999999999999964" width="2.7" height="3.3999999999999995" rx="0.6" fill="#262626" transform="rotate(270 7 7)"/><rect x="5.65" y="-0.09999999999999964" width="2.7" height="3.3999999999999995" rx="0.6" fill="#262626" transform="rotate(315 7 7)"/><circle cx="7" cy="7" r="1.9" fill="#fff"/></svg><svg style="left:1407px;top:911px;" width="8" height="12" viewBox="0 0 8 12"><path d="M2 1 L6.4 6 L2 11" fill="none" stroke="#333" stroke-width="1.3"/></svg>
</div></body></html>
